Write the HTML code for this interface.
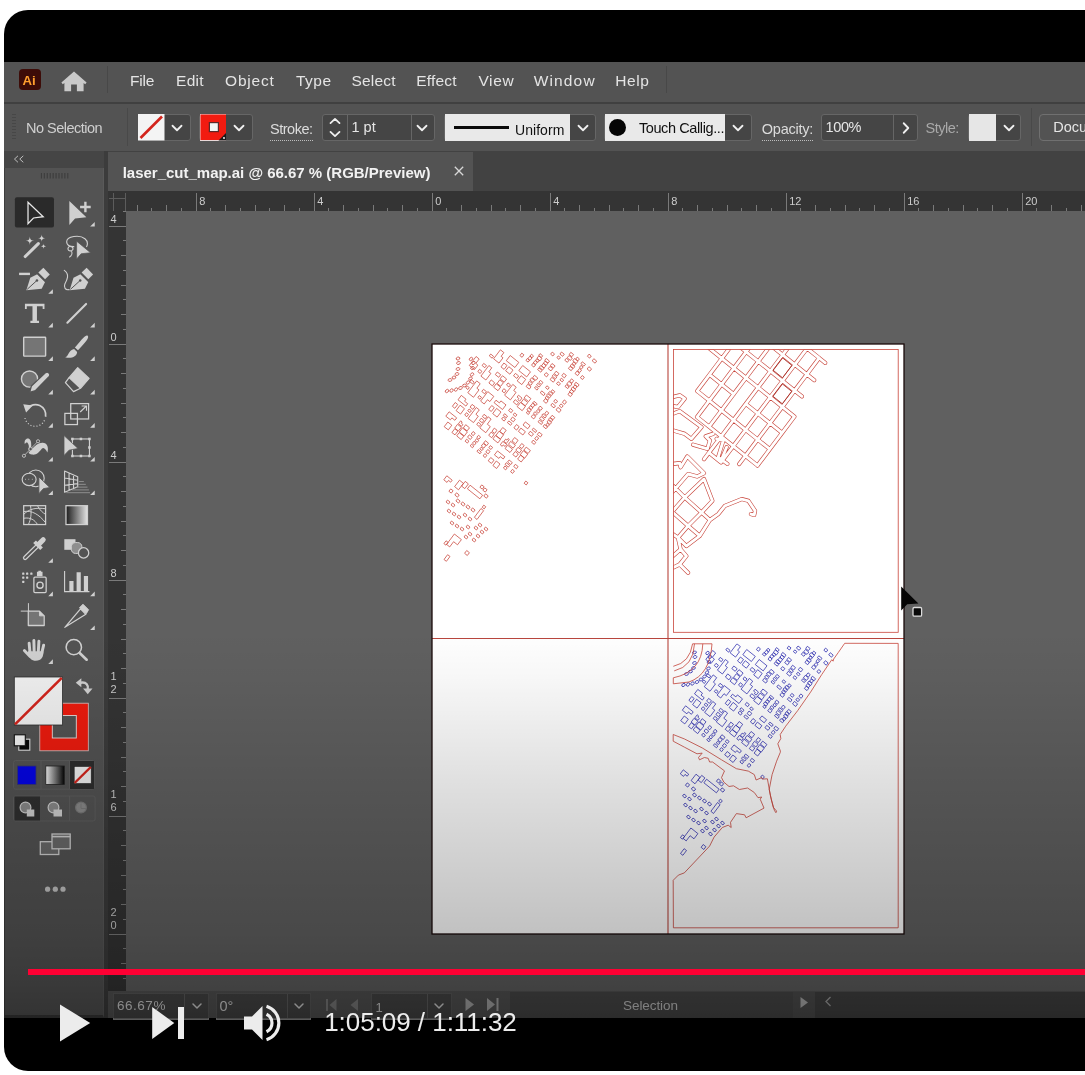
<!DOCTYPE html>
<html lang="en">
<head>
<meta charset="utf-8">
<title>laser_cut_map.ai - video</title>
<style>
html,body{margin:0;padding:0;background:#fff;}
body{width:1085px;height:1075px;overflow:hidden;position:relative;font-family:"Liberation Sans",sans-serif;}
.abs{position:absolute;}
#video{position:absolute;left:4px;top:10px;width:1200px;height:1061px;background:#000;border-radius:24px;overflow:hidden;}
/* everything inside #app uses page coordinates shifted by (-4,-10) */
#app{position:absolute;left:-4px;top:-10px;width:1204px;height:1075px;will-change:transform;}
#menubar{left:4px;top:62px;width:1200px;height:41px;background:#535353;}
#menusep{left:4px;top:102px;width:1200px;height:2px;background:#404040;}
#ctrlbar{left:4px;top:104px;width:1200px;height:47px;background:#535353;}
#tabbar{left:108px;top:151px;width:1100px;height:40px;background:#424242;}
#tab{left:108px;top:152px;width:365px;height:39px;background:#535353;}
#toolhdr{left:4px;top:151px;width:100px;height:17px;background:#454545;}
#toolbar{left:4px;top:168px;width:100px;height:850px;background:#535353;box-sizing:border-box;border-left:1.5px solid #3e3e3e;border-bottom:3px solid #3a3a3a;border-right:1px solid #5a5a5a;}
#toolsep{left:104px;top:151px;width:4px;height:867px;background:#3c3c3c;}
#canvas{left:108px;top:191px;width:1100px;height:800px;background:#606060;}
#hruler{left:108px;top:191px;width:1100px;height:20px;background:#343434;}
#vruler{left:108px;top:191px;width:18px;height:800px;background:#343434;}
#statusbar{left:108px;top:991px;width:1100px;height:27px;background:#535353;overflow:hidden;}
.t{position:absolute;white-space:pre;}
.bx{position:absolute;box-sizing:border-box;}
</style>
</head>
<body>
<div id="video">
<div id="app">
  <div id="menubar" class="abs"></div>
  <div id="menusep" class="abs"></div>
  <div id="ctrlbar" class="abs"></div>
  <div id="tabbar" class="abs"></div>
  <div id="tab" class="abs"></div>
  <div id="toolhdr" class="abs"></div>
  <div id="toolbar" class="abs"></div>
  <div id="toolsep" class="abs"></div>
  <div id="canvas" class="abs"></div>
  <div id="hruler" class="abs"></div>
  <div id="vruler" class="abs"></div>
  <div id="statusbar" class="abs"></div>
  <!--MENU-->
<div class="bx" style="left:19px;top:69px;width:22px;height:21px;border-radius:4px;background:#3d0c08;"></div>
<span class="t" style="left:22.6px;top:71.9px;font-size:13.2px;line-height:17px;color:#ff9f2e;font-weight:700;">Ai</span>
<svg class="abs" style="left:58px;top:68px" width="32" height="26" viewBox="0 0 32 26"><path d="M16 3.6 L28.6 14.6 L27.2 16.2 L25.6 14.9 V23.2 H18.9 V16.4 H13.1 V23.2 H6.4 V14.9 L4.8 16.2 L3.4 14.6 Z" fill="#c9c9c9"/></svg>
<div class="bx" style="left:107px;top:66px;width:1px;height:27px;background:#484848;"></div>
<div class="bx" style="left:666px;top:66px;width:1px;height:27px;background:#484848;"></div>
<span class="t" style="left:130.0px;top:70.6px;font-size:15.5px;line-height:20px;color:#e4e4e4;letter-spacing:-0.192px;">File</span>
<span class="t" style="left:176.1px;top:70.6px;font-size:15.5px;line-height:20px;color:#e4e4e4;letter-spacing:0.230px;">Edit</span>
<span class="t" style="left:225.1px;top:70.6px;font-size:15.5px;line-height:20px;color:#e4e4e4;letter-spacing:0.761px;">Object</span>
<span class="t" style="left:296.0px;top:70.6px;font-size:15.5px;line-height:20px;color:#e4e4e4;letter-spacing:0.465px;">Type</span>
<span class="t" style="left:351.5px;top:70.6px;font-size:15.5px;line-height:20px;color:#e4e4e4;letter-spacing:0.204px;">Select</span>
<span class="t" style="left:416.2px;top:70.6px;font-size:15.5px;line-height:20px;color:#e4e4e4;letter-spacing:0.190px;">Effect</span>
<span class="t" style="left:478.4px;top:70.6px;font-size:15.5px;line-height:20px;color:#e4e4e4;letter-spacing:0.661px;">View</span>
<span class="t" style="left:533.7px;top:70.6px;font-size:15.5px;line-height:20px;color:#e4e4e4;letter-spacing:1.154px;">Window</span>
<span class="t" style="left:615.3px;top:70.6px;font-size:15.5px;line-height:20px;color:#e4e4e4;letter-spacing:0.574px;">Help</span>
<!--/MENU-->
  <!--CTRL-->
<div class="bx" style="left:12px;top:114px;width:4px;height:27px;background:repeating-linear-gradient(to bottom,#474747 0 1.5px,transparent 1.5px 3px);"></div>
<span class="t" style="left:26.1px;top:118.9px;font-size:14.5px;line-height:19px;color:#cfcfcf;letter-spacing:-0.529px;">No Selection</span>
<div class="bx" style="left:127px;top:108px;width:1px;height:38px;background:#494949;"></div>
<div class="bx" style="left:137.5px;top:113.5px;width:53.0px;height:27.0px;background:#454545;border:1px solid #666666;border-radius:3px;"></div>
<svg class="abs" style="left:138px;top:114px" width="26.5" height="26.5" viewBox="0 0 26.5 26.5"><rect width="26.5" height="26.5" fill="#f4f4f4"/><path d="M2.5 24 L24 2.5" stroke="#d3241c" stroke-width="2.6"/></svg>
<svg class="abs" style="left:169.3px;top:119.5px" width="16" height="16" viewBox="-8 -8 16 16"><path transform="rotate(0)" d="M-4.5 -2.25 L0 2.25 L4.5 -2.25" fill="none" stroke="#f0f0f0" stroke-width="1.8" stroke-linecap="round" stroke-linejoin="round"/></svg>
<div class="bx" style="left:199.3px;top:113.5px;width:53.5px;height:27.0px;background:#454545;border:1px solid #666666;border-radius:3px;"></div>
<svg class="abs" style="left:199.8px;top:114px" width="26.5" height="26.5" viewBox="0 0 26.5 26.5"><rect width="26.5" height="26.5" fill="#f21b10" stroke="#e8d8d8" stroke-width="1"/><rect x="9.4" y="8.6" width="9" height="9" fill="#f4f4f4" stroke="#5a2a2a" stroke-width="1.2"/><path d="M26.5 18.5 V26.5 H18.5 Z" fill="#1a1a1a"/><circle cx="24" cy="24" r="0.9" fill="#fff"/></svg>
<svg class="abs" style="left:231.4px;top:119.5px" width="16" height="16" viewBox="-8 -8 16 16"><path transform="rotate(0)" d="M-4.5 -2.25 L0 2.25 L4.5 -2.25" fill="none" stroke="#f0f0f0" stroke-width="1.8" stroke-linecap="round" stroke-linejoin="round"/></svg>
<span class="t" style="left:270.0px;top:118.9px;font-size:14.5px;line-height:19px;color:#dcdcdc;letter-spacing:-0.489px;border-bottom:1px dotted #bdbdbd;padding-bottom:0px;line-height:21px;">Stroke:</span>
<div class="bx" style="left:322.0px;top:113.5px;width:113.0px;height:27.0px;background:#454545;border:1px solid #666666;border-radius:3px;"></div>
<div class="bx" style="left:347px;top:114px;width:1px;height:26px;background:#666;"></div>
<div class="bx" style="left:410.5px;top:114px;width:1px;height:26px;background:#666;"></div>
<svg class="abs" style="left:326.7px;top:113.3px" width="16" height="16" viewBox="-8 -8 16 16"><path transform="rotate(180)" d="M-4.5 -2.1 L0 2.1 L4.5 -2.1" fill="none" stroke="#f0f0f0" stroke-width="1.8" stroke-linecap="round" stroke-linejoin="round"/></svg>
<svg class="abs" style="left:326.7px;top:125.6px" width="16" height="16" viewBox="-8 -8 16 16"><path transform="rotate(0)" d="M-4.5 -2.1 L0 2.1 L4.5 -2.1" fill="none" stroke="#f0f0f0" stroke-width="1.8" stroke-linecap="round" stroke-linejoin="round"/></svg>
<span class="t" style="left:351.5px;top:118.3px;font-size:14.5px;line-height:19px;color:#e6e6e6;">1 pt</span>
<svg class="abs" style="left:414.3px;top:119.5px" width="16" height="16" viewBox="-8 -8 16 16"><path transform="rotate(0)" d="M-4.5 -2.25 L0 2.25 L4.5 -2.25" fill="none" stroke="#f0f0f0" stroke-width="1.8" stroke-linecap="round" stroke-linejoin="round"/></svg>
<div class="bx" style="left:444.0px;top:113.5px;width:152.0px;height:27.0px;background:#454545;border:1px solid #666666;border-radius:3px;"></div>
<div class="bx" style="left:444.6px;top:114px;width:125.2px;height:26.5px;background:#e9e9e9;"></div>
<div class="bx" style="left:453.5px;top:126.3px;width:55.3px;height:3.2px;background:#0a0a0a;"></div>
<span class="t" style="left:515.0px;top:120.9px;font-size:14px;line-height:18px;color:#101010;letter-spacing:0.049px;">Uniform</span>
<svg class="abs" style="left:574.6px;top:119.5px" width="16" height="16" viewBox="-8 -8 16 16"><path transform="rotate(0)" d="M-4.5 -2.25 L0 2.25 L4.5 -2.25" fill="none" stroke="#f0f0f0" stroke-width="1.8" stroke-linecap="round" stroke-linejoin="round"/></svg>
<div class="bx" style="left:604.0px;top:113.5px;width:148.0px;height:27.0px;background:#454545;border:1px solid #666666;border-radius:3px;"></div>
<div class="bx" style="left:604.6px;top:114px;width:120.6px;height:26.5px;background:#e9e9e9;"></div>
<div class="bx" style="left:609.1px;top:118.8px;width:17.4px;height:17.4px;border-radius:50%;background:#050505;"></div>
<span class="t" style="left:638.9px;top:119.1px;font-size:14.5px;line-height:19px;color:#101010;letter-spacing:-0.391px;">Touch Callig...</span>
<svg class="abs" style="left:730.3px;top:119.5px" width="16" height="16" viewBox="-8 -8 16 16"><path transform="rotate(0)" d="M-4.5 -2.25 L0 2.25 L4.5 -2.25" fill="none" stroke="#f0f0f0" stroke-width="1.8" stroke-linecap="round" stroke-linejoin="round"/></svg>
<span class="t" style="left:761.8px;top:118.9px;font-size:14.5px;line-height:19px;color:#dcdcdc;letter-spacing:-0.255px;border-bottom:1px dotted #bdbdbd;line-height:21px;">Opacity:</span>
<div class="bx" style="left:821.3px;top:113.5px;width:96.7px;height:27.0px;background:#454545;border:1px solid #666666;border-radius:3px;"></div>
<div class="bx" style="left:892.5px;top:114px;width:1px;height:26px;background:#666;"></div>
<span class="t" style="left:825.5px;top:118.3px;font-size:14.5px;line-height:19px;color:#e6e6e6;letter-spacing:-0.362px;">100%</span>
<svg class="abs" style="left:897.5px;top:119.5px" width="16" height="16" viewBox="-8 -8 16 16"><path transform="rotate(-90)" d="M-4.75 -2.3 L0 2.3 L4.75 -2.3" fill="none" stroke="#f0f0f0" stroke-width="1.8" stroke-linecap="round" stroke-linejoin="round"/></svg>
<span class="t" style="left:925.6px;top:118.7px;font-size:14.5px;line-height:19px;color:#a9a9a9;letter-spacing:-0.493px;">Style:</span>
<div class="bx" style="left:968.3px;top:113.5px;width:53.2px;height:27.0px;background:#454545;border:1px solid #666666;border-radius:3px;"></div>
<div class="bx" style="left:968.9px;top:114px;width:27px;height:26.5px;background:#e6e6e6;"></div>
<svg class="abs" style="left:1000.8px;top:119.5px" width="16" height="16" viewBox="-8 -8 16 16"><path transform="rotate(0)" d="M-4.5 -2.25 L0 2.25 L4.5 -2.25" fill="none" stroke="#f0f0f0" stroke-width="1.8" stroke-linecap="round" stroke-linejoin="round"/></svg>
<div class="bx" style="left:1031px;top:108px;width:1px;height:38px;background:#494949;"></div>
<div class="bx" style="left:1039.2px;top:113.5px;width:160.8px;height:27.0px;background:#535353;border:1px solid #707070;border-radius:4px;"></div>
<span class="t" style="left:1053.3px;top:118.3px;font-size:14.5px;line-height:19px;color:#e6e6e6;">Document Setup</span>
<!--/CTRL-->
  <!--TOOLS-->
<svg class="abs" style="left:4px;top:150px" width="104" height="870" viewBox="4 150 104 870"><defs><linearGradient id="gtool" x1="0" x2="1" y1="0" y2="0"><stop offset="0" stop-color="#1c1c1c"/><stop offset="1" stop-color="#e4e4e4"/></linearGradient><linearGradient id="gmode" x1="0" x2="1" y1="0" y2="0"><stop offset="0" stop-color="#f4f4f4"/><stop offset="1" stop-color="#050505"/></linearGradient></defs><g transform="translate(4,150) scale(0.13961)"><path d="M100 42L75 65L100 88M138 42L113 65L138 88" fill="none" stroke="#c0c0c0" stroke-width="7"/><path d="M268 165V205 M289 165V205 M310 165V205 M331 165V205 M352 165V205 M373 165V205 M394 165V205 M415 165V205 M436 165V205 M457 165V205" stroke="#3d3d3d" stroke-width="8"/><rect x="78" y="338" width="280" height="217" rx="14" fill="#2a2a2a"/><path d="M172 374L172 528L211 487L281 478Z" fill="none" stroke="#e8e8e8" stroke-width="9" stroke-linejoin="miter"/><path d="M468 366L468 537L509 491L590 482Z" fill="#d0d0d0"/><path d="M583 370V446M545 408H621" stroke="#d0d0d0" stroke-width="17"/><path d="M650 515V548H617Z" fill="#d0d0d0"/><path d="M152 763L246 670" stroke="#d0d0d0" stroke-width="22" stroke-linecap="round"/><path d="M185 620Q185 650 215 650Q185 650 185 680Q185 650 155 650Q185 650 185 620ZM270 606Q270 632 296 632Q270 632 270 658Q270 632 244 632Q270 632 270 606ZM283 670Q283 690 303 690Q283 690 283 710Q283 690 263 690Q283 690 283 670Z" fill="#d0d0d0"/><path d="M500 692C436 690 428 632 500 620C570 610 612 648 592 692M472 690C448 700 458 732 486 720C502 712 492 690 472 690M482 722C492 740 484 758 470 766" fill="none" stroke="#d0d0d0" stroke-width="8" stroke-linecap="round"/><path d="M520 653L520 780L553 743L620 736Z" fill="#d0d0d0" stroke="#535353" stroke-width="5"/><rect x="108" y="879" width="78" height="17" fill="#d0d0d0"/><g transform="translate(0,0)"><path d="M160 1004 L188 915 L238 890 L294 946 L270 994 Z" fill="#d0d0d0"/><path d="M246 878 L282 844 L328 892 L294 926 Z" fill="#d0d0d0"/><path d="M236 884 L300 948" stroke="#535353" stroke-width="7"/><path d="M166 998 L232 938" stroke="#535353" stroke-width="7"/><circle cx="236" cy="934" r="9" fill="#535353"/></g><path d="M350 997V1030H317Z" fill="#d0d0d0"/><g transform="translate(310,0)"><path d="M160 1004 L188 915 L238 890 L294 946 L270 994 Z" fill="#d0d0d0"/><path d="M246 878 L282 844 L328 892 L294 926 Z" fill="#d0d0d0"/><path d="M236 884 L300 948" stroke="#535353" stroke-width="7"/><path d="M166 998 L232 938" stroke="#535353" stroke-width="7"/><circle cx="236" cy="934" r="9" fill="#535353"/></g><path d="M432 862C472 890 452 930 436 960C426 985 440 1006 466 1000" fill="none" stroke="#d0d0d0" stroke-width="8" stroke-linecap="round"/></g><g transform="translate(4,295) scale(0.13961)"><path d="M150 62H290V100H277V80H236V184H251V200H189V184H204V80H163V100H150Z" fill="#d0d0d0"/><path d="M350 199V232H317Z" fill="#d0d0d0"/><path d="M650 199V232H617Z" fill="#d0d0d0"/><path d="M454 198L588 64" stroke="#d0d0d0" stroke-width="15" stroke-linecap="round"/><rect x="141" y="303" width="157" height="135" rx="4" fill="#757575" stroke="#d0d0d0" stroke-width="10"/><path d="M350 439V472H317Z" fill="#d0d0d0"/><path d="M650 439V472H617Z" fill="#d0d0d0"/><path d="M600 292C586 282 572 300 508 376L530 396C594 330 610 305 600 292Z" fill="#d0d0d0"/><path d="M502 386L524 408C522 442 480 458 438 446C466 436 458 396 502 386Z" fill="#d0d0d0"/><circle cx="183" cy="602" r="58" fill="#757575" stroke="#d0d0d0" stroke-width="10"/><path d="M184 698L196 652L298 556C314 544 338 568 324 584L226 684Z" fill="#d0d0d0" stroke="#535353" stroke-width="9" stroke-linejoin="round"/><path d="M350 679V712H317Z" fill="#d0d0d0"/><path d="M650 679V712H617Z" fill="#d0d0d0"/><path d="M528 520L610 598L548 668L466 592Z" fill="#d0d0d0" stroke="#d0d0d0" stroke-width="8" stroke-linejoin="round"/><path d="M466 592L440 628L498 692L548 668" fill="none" stroke="#d0d0d0" stroke-width="9" stroke-linejoin="round"/><path d="M168 812A74 74 0 0 1 298 872" fill="none" stroke="#d0d0d0" stroke-width="12"/><path d="M138 782L206 792L158 842Z" fill="#d0d0d0"/><path d="M290 898A74 74 0 0 1 150 878" fill="none" stroke="#d0d0d0" stroke-width="9" stroke-dasharray="7 15"/><path d="M350 917V950H317Z" fill="#d0d0d0"/><path d="M650 917V950H617Z" fill="#d0d0d0"/><rect x="478" y="778" width="128" height="110" fill="none" stroke="#d0d0d0" stroke-width="9"/><rect x="436" y="848" width="90" height="80" fill="none" stroke="#d0d0d0" stroke-width="9"/><path d="M546 838L588 797M556 795H591V829" fill="none" stroke="#d0d0d0" stroke-width="8"/></g><g transform="translate(4,425) scale(0.13961)"><path d="M350 229V262H317Z" fill="#d0d0d0"/><path d="M650 229V262H617Z" fill="#d0d0d0"/><rect x="490" y="100" width="122" height="122" fill="none" stroke="#d0d0d0" stroke-width="8"/><rect x="481" y="91" width="18" height="18" fill="#d0d0d0"/><rect x="542" y="91" width="18" height="18" fill="#d0d0d0"/><rect x="603" y="91" width="18" height="18" fill="#d0d0d0"/><rect x="603" y="152" width="18" height="18" fill="#d0d0d0"/><rect x="603" y="213" width="18" height="18" fill="#d0d0d0"/><rect x="542" y="213" width="18" height="18" fill="#d0d0d0"/><rect x="481" y="213" width="18" height="18" fill="#d0d0d0"/><path d="M430 76L430 218L466 180L530 168Z" fill="#d0d0d0" stroke="#535353" stroke-width="5"/><circle cx="228" cy="382" r="60" fill="none" stroke="#d0d0d0" stroke-width="8"/><ellipse cx="180" cy="390" rx="50" ry="44" fill="#535353" stroke="#d0d0d0" stroke-width="8"/><path d="M152 390H156M176 390H180M200 390H204" stroke="#d0d0d0" stroke-width="9"/><path d="M250 372L250 492L282 456L328 448Z" fill="#d0d0d0" stroke="#535353" stroke-width="6"/><path d="M350 469V502H317Z" fill="#d0d0d0"/><path d="M650 469V502H617Z" fill="#d0d0d0"/><path d="M434 330L528 370V442L434 482ZM466 344V468M498 357V455M434 380L528 396M434 432L528 420" fill="none" stroke="#d0d0d0" stroke-width="8" stroke-linejoin="round"/><path d="M536 405H572M530 425H586M518 445H598M486 465H608M446 485H616" stroke="#9a9a9a" stroke-width="6"/><rect x="141" y="578" width="157" height="135" fill="none" stroke="#d0d0d0" stroke-width="9"/><path d="M141 620C200 610 250 640 298 700M141 668C190 660 220 680 240 713M190 578C200 640 190 680 175 713M240 578C255 610 280 630 298 640M141 640C180 600 230 590 298 600" fill="none" stroke="#d0d0d0" stroke-width="7"/><rect x="444" y="578" width="154" height="135" fill="url(#gtool)" stroke="#d0d0d0" stroke-width="9"/><path d="M350 954V987H317Z" fill="#d0d0d0"/><rect x="432" y="818" width="80" height="76" fill="#d0d0d0"/><rect x="482" y="842" width="76" height="78" rx="30" fill="#8e8e8e" stroke="#d0d0d0" stroke-width="7"/><circle cx="570" cy="916" r="37" fill="#535353" stroke="#d0d0d0" stroke-width="9"/></g><g transform="translate(4,555) scale(0.13961)"><rect x="214" y="158" width="88" height="112" rx="8" fill="none" stroke="#d0d0d0" stroke-width="9"/><circle cx="258" cy="216" r="22" fill="none" stroke="#d0d0d0" stroke-width="10"/><path d="M236 120H276V152H236ZM246 112H266V122H246Z" fill="#d0d0d0"/><rect x="130" y="126" width="16" height="16" rx="3" fill="#d0d0d0"/><rect x="158" y="126" width="16" height="16" rx="3" fill="#d0d0d0"/><rect x="188" y="126" width="16" height="16" rx="3" fill="#d0d0d0"/><rect x="130" y="154" width="16" height="16" rx="3" fill="#d0d0d0"/><rect x="158" y="154" width="16" height="16" rx="3" fill="#d0d0d0"/><rect x="130" y="184" width="16" height="16" rx="3" fill="#d0d0d0"/><path d="M350 262V295H317Z" fill="#d0d0d0"/><path d="M650 262V295H617Z" fill="#d0d0d0"/><path d="M434 114V262H612" fill="none" stroke="#d0d0d0" stroke-width="8"/><path d="M468 186H498V260H468ZM520 124H550V260H520ZM572 150H602V260H572Z" fill="#d0d0d0"/><path d="M120 402H182M175 345V402" stroke="#d0d0d0" stroke-width="7"/><path d="M174 402H254L288 436V505H174Z" fill="#757575" stroke="#d0d0d0" stroke-width="9" stroke-linejoin="round"/><path d="M254 402V436H288" fill="#d0d0d0" stroke="#d0d0d0" stroke-width="6"/><path d="M436 518L548 386L586 424Z" fill="#535353" stroke="#d0d0d0" stroke-width="9" stroke-linejoin="round"/><path d="M540 378L566 352L606 392L590 420Z" fill="#d0d0d0" stroke="#d0d0d0" stroke-width="6" stroke-linejoin="round"/><path d="M650 505V538H617Z" fill="#d0d0d0"/><path d="M186 700L180 632M216 690L214 612M246 690L250 618M270 705L284 646M185 725L146 684" fill="none" stroke="#d0d0d0" stroke-width="21" stroke-linecap="round"/><path d="M172 690H282C284 730 268 758 228 758C198 758 176 738 172 700Z" fill="#d0d0d0"/><path d="M350 747V780H317Z" fill="#d0d0d0"/><circle cx="500" cy="660" r="55" fill="none" stroke="#d0d0d0" stroke-width="11"/><path d="M542 702L592 750" stroke="#d0d0d0" stroke-width="19" stroke-linecap="round"/><path d="M548 915C592 905 606 940 600 962" fill="none" stroke="#d0d0d0" stroke-width="17"/><path d="M514 915L554 882V948ZM600 998L566 956H634Z" fill="#d0d0d0"/></g><g transform="translate(14,428) scale(0.08292)"><path d="M130 192C118 140 165 104 196 145C216 175 200 215 216 236C260 216 300 168 360 180C402 186 422 240 402 296C386 260 360 226 335 250C300 292 270 330 215 320C180 314 160 290 175 250C186 224 176 190 160 176C150 170 140 180 130 192Z" fill="#d0d0d0"/><path d="M120 335L290 160" stroke="#535353" stroke-width="26"/><path d="M120 335L290 160" stroke="#d0d0d0" stroke-width="9"/><circle cx="120" cy="335" r="19" fill="#535353" stroke="#d0d0d0" stroke-width="10"/><circle cx="200" cy="254" r="21" fill="#535353" stroke="#d0d0d0" stroke-width="10"/><circle cx="290" cy="160" r="19" fill="#535353" stroke="#d0d0d0" stroke-width="10"/></g><g transform="translate(14,530) scale(0.08292)"><path d="M134 336L282 192" stroke="#d0d0d0" stroke-width="54" stroke-linecap="round"/><path d="M134 336L290 184" stroke="#535353" stroke-width="24" stroke-linecap="round"/><path d="M248 142L332 226" stroke="#d0d0d0" stroke-width="46" stroke-linecap="butt"/><path d="M300 170L352 118" stroke="#d0d0d0" stroke-width="62" stroke-linecap="round"/></g><rect x="39.8" y="703.2" width="48.5" height="47.6" fill="#ee1b0e" stroke="#d8c8c8" stroke-width="0.8"/><rect x="52.3" y="715.5" width="24" height="22.5" fill="#535353" stroke="#e8e0e0" stroke-width="0.9"/><rect x="14.3" y="677" width="48.2" height="48" fill="#f1f1f1" stroke="#2e2e2e" stroke-width="0.8"/><path d="M15 724.3L61.8 677.8" stroke="#d3241c" stroke-width="2.6"/><rect x="18.8" y="739.2" width="11" height="11" fill="#0a0a0a" stroke="#e4e4e4" stroke-width="1.1"/><rect x="14.3" y="734.8" width="11" height="11" fill="#f4f4f4" stroke="#111" stroke-width="1.1"/><rect x="13.6" y="760.6" width="80.6" height="28.6" rx="2" fill="none" stroke="#5f5f5f" stroke-width="1"/><path d="M41 761V789M69.6 761V789" stroke="#5f5f5f" stroke-width="1"/><rect x="70" y="761" width="24" height="28" fill="#2e2e2e"/><rect x="17.5" y="766" width="18.5" height="18.5" fill="#0404e6" stroke="#3a3a6a" stroke-width="0.8"/><rect x="45.8" y="766" width="18.5" height="18.5" fill="url(#gmode)" stroke="#222" stroke-width="0.8"/><rect x="74.2" y="766.5" width="17" height="17" fill="#f0f0f0" stroke="#222" stroke-width="0.6"/><path d="M74.6 783L90.8 767" stroke="#d3241c" stroke-width="2.4"/><rect x="13.6" y="796" width="81.5" height="25" rx="2" fill="none" stroke="#5f5f5f" stroke-width="1"/><path d="M69.6 796V821" stroke="#5f5f5f" stroke-width="1"/><rect x="14.5" y="796.5" width="25.5" height="24" fill="#303030"/><circle cx="25.5" cy="807.5" r="5.4" fill="#8a8a8a" stroke="#d0d0d0" stroke-width="1.2"/><circle cx="53.5" cy="807.5" r="5.4" fill="#8a8a8a" stroke="#d0d0d0" stroke-width="1.2"/><circle cx="81.0" cy="807.5" r="5.4" fill="#8a8a8a" stroke="#7a7a7a" stroke-width="1.2"/><rect x="26.8" y="809.5" width="7.5" height="7" fill="#d0d0d0"/><rect x="53.5" y="809.5" width="8.5" height="7" fill="#d0d0d0"/><path d="M81 803.5V808.5H86" fill="none" stroke="#7a7a7a" stroke-width="1"/><rect x="40.3" y="841.7" width="18.5" height="12.8" fill="#6a6a6a" stroke="#d0d0d0" stroke-width="1.3"/><rect x="52" y="834" width="18.2" height="14.8" fill="#6a6a6a" stroke="#d0d0d0" stroke-width="1.3"/><path d="M52 836.6H70.2" stroke="#d0d0d0" stroke-width="1.6"/><circle cx="47.6" cy="889.2" r="2.6" fill="#c4c4c4"/><circle cx="55.3" cy="889.2" r="2.6" fill="#c4c4c4"/><circle cx="63" cy="889.2" r="2.6" fill="#c4c4c4"/></svg>
<!--/TOOLS-->
  <!--RULERS-->
<span class="t" style="left:122.7px;top:162.5px;font-size:15px;line-height:20px;color:#f2f2f2;font-weight:700;letter-spacing:-0.010px;">laser_cut_map.ai @ 66.67 % (RGB/Preview)</span>
<svg class="abs" style="left:453px;top:165px" width="12" height="12" viewBox="0 0 12 12"><path d="M1.8 1.8 L10.2 10.2 M10.2 1.8 L1.8 10.2" stroke="#d8d8d8" stroke-width="1.3"/></svg>
<svg class="abs" style="left:108px;top:191px" width="1100" height="830" viewBox="108 191 1100 830" font-family="Liberation Sans, sans-serif" font-size="11" fill="#cccccc">
<path d="M137.0 205V211 M151.8 207.5V211 M166.5 205V211 M181.2 207.5V211 M196.0 193V211 M210.8 207.5V211 M225.5 205V211 M240.2 207.5V211 M255.0 205V211 M269.8 207.5V211 M284.5 205V211 M299.2 207.5V211 M314.0 193V211 M328.8 207.5V211 M343.5 205V211 M358.2 207.5V211 M373.0 205V211 M387.8 207.5V211 M402.5 205V211 M417.2 207.5V211 M432.0 193V211 M446.8 207.5V211 M461.5 205V211 M476.2 207.5V211 M491.0 205V211 M505.8 207.5V211 M520.5 205V211 M535.2 207.5V211 M550.0 193V211 M564.8 207.5V211 M579.5 205V211 M594.2 207.5V211 M609.0 205V211 M623.8 207.5V211 M638.5 205V211 M653.2 207.5V211 M668.0 193V211 M682.8 207.5V211 M697.5 205V211 M712.2 207.5V211 M727.0 205V211 M741.8 207.5V211 M756.5 205V211 M771.2 207.5V211 M786.0 193V211 M800.8 207.5V211 M815.5 205V211 M830.2 207.5V211 M845.0 205V211 M859.8 207.5V211 M874.5 205V211 M889.2 207.5V211 M904.0 193V211 M918.8 207.5V211 M933.5 205V211 M948.2 207.5V211 M963.0 205V211 M977.8 207.5V211 M992.5 205V211 M1007.2 207.5V211 M1022.0 193V211 M1036.8 207.5V211 M1051.5 205V211 M1066.2 207.5V211 M1081.0 205V211 M1095.8 207.5V211" stroke="#7a7a7a" stroke-width="1" fill="none" shape-rendering="crispEdges"/>
<text x="199.2" y="205">8</text>
<text x="317.2" y="205">4</text>
<text x="435.2" y="205">0</text>
<text x="553.2" y="205">4</text>
<text x="671.2" y="205">8</text>
<text x="789.2" y="205">12</text>
<text x="907.2" y="205">16</text>
<text x="1025.2" y="205">20</text>
<path d="M122.5 211.2H126 M109 226.0H126 M122.5 240.8H126 M120.5 255.5H126 M122.5 270.2H126 M120.5 285.0H126 M122.5 299.8H126 M120.5 314.5H126 M122.5 329.2H126 M109 344.0H126 M122.5 358.8H126 M120.5 373.5H126 M122.5 388.2H126 M120.5 403.0H126 M122.5 417.8H126 M120.5 432.5H126 M122.5 447.2H126 M109 462.0H126 M122.5 476.8H126 M120.5 491.5H126 M122.5 506.2H126 M120.5 521.0H126 M122.5 535.8H126 M120.5 550.5H126 M122.5 565.2H126 M109 580.0H126 M122.5 594.8H126 M120.5 609.5H126 M122.5 624.2H126 M120.5 639.0H126 M122.5 653.8H126 M120.5 668.5H126 M122.5 683.2H126 M109 698.0H126 M122.5 712.8H126 M120.5 727.5H126 M122.5 742.2H126 M120.5 757.0H126 M122.5 771.8H126 M120.5 786.5H126 M122.5 801.2H126 M109 816.0H126 M122.5 830.8H126 M120.5 845.5H126 M122.5 860.2H126 M120.5 875.0H126 M122.5 889.8H126 M120.5 904.5H126 M122.5 919.2H126 M109 934.0H126 M122.5 948.8H126 M120.5 963.5H126 M122.5 978.2H126 M120.5 993.0H126" stroke="#7a7a7a" stroke-width="1" fill="none" shape-rendering="crispEdges"/>
<text x="110.5" y="222.5">4</text>
<text x="110.5" y="340.5">0</text>
<text x="110.5" y="458.5">4</text>
<text x="110.5" y="576.5">8</text>
<text x="110.5" y="680">1</text><text x="110.5" y="693">2</text>
<text x="110.5" y="798">1</text><text x="110.5" y="811">6</text>
<text x="110.5" y="916">2</text><text x="110.5" y="929">0</text>
<path d="M109 198.5H126M113.5 193V211M125.5 193V211" stroke="#5c5c5c" stroke-width="1" fill="none" shape-rendering="crispEdges"/>
</svg>
<!--/RULERS-->
  <!--ARTBOARD-->
<svg class="abs" style="left:420px;top:335px" width="500" height="610" viewBox="420 335 500 610">
<defs><clipPath id="cTR"><rect x="673.4" y="349.4" width="224.8" height="282.9"/></clipPath><clipPath id="cBR"><rect x="673.4" y="643.4" width="224.8" height="284.4"/></clipPath></defs>
<rect x="432" y="344" width="472" height="590" fill="#ffffff"/>
<g clip-path="url(#cTR)" fill="none" stroke-linecap="round" stroke-linejoin="round"><path d="M782.3 406.9L794.4 416.6 M794.4 416.6L782.1 432.9 M782.1 432.9L770.0 423.2 M770.0 423.2L782.3 406.9 M770.0 423.2L782.1 432.9 M782.1 432.9L769.8 449.2 M769.8 449.2L757.7 439.5 M757.7 439.5L770.0 423.2 M757.7 439.5L769.8 449.2 M769.8 449.2L757.5 465.5 M757.5 465.5L745.4 455.8 M745.4 455.8L757.7 439.5 M807.1 348.3L819.2 358.0 M819.2 358.0L806.9 374.3 M806.9 374.3L794.8 364.6 M794.8 364.6L807.1 348.3 M794.8 364.6L806.9 374.3 M806.9 374.3L794.6 390.6 M794.6 390.6L782.5 380.9 M782.5 380.9L794.8 364.6 M782.5 380.9L794.6 390.6 M794.6 390.6L782.3 406.9 M782.3 406.9L770.2 397.2 M770.2 397.2L782.5 380.9 M770.2 397.2L782.3 406.9 M782.3 406.9L770.0 423.2 M770.0 423.2L757.9 413.5 M757.9 413.5L770.2 397.2 M757.9 413.5L770.0 423.2 M770.0 423.2L757.7 439.5 M757.7 439.5L745.6 429.8 M745.6 429.8L757.9 413.5 M745.6 429.8L757.7 439.5 M757.7 439.5L745.4 455.8 M745.4 455.8L733.3 446.1 M733.3 446.1L745.6 429.8 M795.0 338.6L807.1 348.3 M807.1 348.3L794.8 364.6 M794.8 364.6L782.7 354.9 M782.7 354.9L795.0 338.6 M782.7 354.9L794.8 364.6 M794.8 364.6L782.5 380.9 M782.5 380.9L770.4 371.2 M770.4 371.2L782.7 354.9 M770.4 371.2L782.5 380.9 M782.5 380.9L770.2 397.2 M770.2 397.2L758.1 387.5 M758.1 387.5L770.4 371.2 M758.1 387.5L770.2 397.2 M770.2 397.2L757.9 413.5 M757.9 413.5L745.8 403.8 M745.8 403.8L758.1 387.5 M745.8 403.8L757.9 413.5 M757.9 413.5L745.6 429.8 M745.6 429.8L733.5 420.1 M733.5 420.1L745.8 403.8 M733.5 420.1L745.6 429.8 M745.6 429.8L733.3 446.1 M733.3 446.1L721.2 436.4 M721.2 436.4L733.5 420.1 M721.2 436.4L733.3 446.1 M733.3 446.1L721.0 462.4 M721.0 462.4L708.9 452.7 M708.9 452.7L721.2 436.4 M770.6 345.2L782.7 354.9 M782.7 354.9L770.4 371.2 M770.4 371.2L758.3 361.5 M758.3 361.5L770.6 345.2 M758.3 361.5L770.4 371.2 M770.4 371.2L758.1 387.5 M758.1 387.5L746.0 377.8 M746.0 377.8L758.3 361.5 M746.0 377.8L758.1 387.5 M758.1 387.5L745.8 403.8 M733.7 394.1L746.0 377.8 M745.8 403.8L733.5 420.1 M733.5 420.1L721.4 410.4 M721.4 410.4L733.7 394.1 M721.4 410.4L733.5 420.1 M733.5 420.1L721.2 436.4 M721.2 436.4L709.1 426.7 M709.1 426.7L721.4 410.4 M758.5 335.5L770.6 345.2 M770.6 345.2L758.3 361.5 M758.3 361.5L746.2 351.8 M746.2 351.8L758.5 335.5 M746.2 351.8L758.3 361.5 M758.3 361.5L746.0 377.8 M746.0 377.8L733.9 368.1 M733.9 368.1L746.2 351.8 M733.9 368.1L746.0 377.8 M746.0 377.8L733.7 394.1 M733.7 394.1L721.6 384.4 M721.6 384.4L733.9 368.1 M721.6 384.4L733.7 394.1 M733.7 394.1L721.4 410.4 M721.4 410.4L709.3 400.7 M709.3 400.7L721.6 384.4 M709.3 400.7L721.4 410.4 M721.4 410.4L709.1 426.7 M709.1 426.7L697.0 417.0 M697.0 417.0L709.3 400.7 M734.1 342.1L746.2 351.8 M746.2 351.8L733.9 368.1 M733.9 368.1L721.8 358.4 M721.8 358.4L734.1 342.1 M721.8 358.4L733.9 368.1 M733.9 368.1L721.6 384.4 M721.6 384.4L709.5 374.7 M709.5 374.7L721.8 358.4 M709.5 374.7L721.6 384.4 M721.6 384.4L709.3 400.7 M709.3 400.7L697.2 391.0 M697.2 391.0L709.5 374.7 M722.0 332.4L734.1 342.1 M734.1 342.1L721.8 358.4 M721.8 358.4L709.7 348.7 M709.7 348.7L722.0 332.4 M819.2 358.0L825.2 362.9 M806.9 374.3L814.2 380.1 M794.6 390.6L801.9 396.4 M745.4 455.8L739.2 464.0 M708.9 452.7L704.0 459.2 M733.3 446.1L729.6 451.0 M722.0 332.4L728.2 324.2 M673.0 396.9L679.7 395.3L684.7 398.6L678.0 407.0L673.0 406.1 M673.0 413.7L679.7 411.2L701.5 427.1L691.4 438.8L684.7 433.8L673.0 430.4 M693.1 444.7L707.4 448.8L709.9 440.5L705.7 436.3L713.2 433.8 M716.6 438.8L723.3 440.5L718.2 457.2L727.4 463.9 M726.6 447.2L722.4 457.2 M673.0 463.9L679.7 463.1L680.6 467.3L687.3 456.4L704.0 473.1L697.3 476.5L688.1 474.0L673.0 491.5 M673.0 485.7L684.7 497.4L704.0 479.0L712.4 500.8L701.5 512.5L684.7 497.4 M684.7 497.4L673.0 510.8 M701.5 512.5L709.9 520.0L718.2 514.1L724.9 505.8L741.7 499.1L748.4 500.8L755.1 510.8L754.2 515.0L750.9 514.1 M701.5 512.5L688.1 525.9L673.0 512.5 M688.1 525.9L699.8 535.9L709.9 520.0 M688.1 525.9L678.0 537.6L673.0 534.2 M678.0 537.6L686.4 546.0L699.8 535.9 M673.0 556.0L680.6 549.3L678.0 537.6 M680.6 549.3L686.4 556.0L679.7 564.4L688.1 572.8 M673.0 567.7L679.7 564.4" stroke="#c8443a" stroke-width="4.1"/><path d="M782.3 406.9L794.4 416.6 M794.4 416.6L782.1 432.9 M782.1 432.9L770.0 423.2 M770.0 423.2L782.3 406.9 M770.0 423.2L782.1 432.9 M782.1 432.9L769.8 449.2 M769.8 449.2L757.7 439.5 M757.7 439.5L770.0 423.2 M757.7 439.5L769.8 449.2 M769.8 449.2L757.5 465.5 M757.5 465.5L745.4 455.8 M745.4 455.8L757.7 439.5 M807.1 348.3L819.2 358.0 M819.2 358.0L806.9 374.3 M806.9 374.3L794.8 364.6 M794.8 364.6L807.1 348.3 M794.8 364.6L806.9 374.3 M806.9 374.3L794.6 390.6 M794.6 390.6L782.5 380.9 M782.5 380.9L794.8 364.6 M782.5 380.9L794.6 390.6 M794.6 390.6L782.3 406.9 M782.3 406.9L770.2 397.2 M770.2 397.2L782.5 380.9 M770.2 397.2L782.3 406.9 M782.3 406.9L770.0 423.2 M770.0 423.2L757.9 413.5 M757.9 413.5L770.2 397.2 M757.9 413.5L770.0 423.2 M770.0 423.2L757.7 439.5 M757.7 439.5L745.6 429.8 M745.6 429.8L757.9 413.5 M745.6 429.8L757.7 439.5 M757.7 439.5L745.4 455.8 M745.4 455.8L733.3 446.1 M733.3 446.1L745.6 429.8 M795.0 338.6L807.1 348.3 M807.1 348.3L794.8 364.6 M794.8 364.6L782.7 354.9 M782.7 354.9L795.0 338.6 M782.7 354.9L794.8 364.6 M794.8 364.6L782.5 380.9 M782.5 380.9L770.4 371.2 M770.4 371.2L782.7 354.9 M770.4 371.2L782.5 380.9 M782.5 380.9L770.2 397.2 M770.2 397.2L758.1 387.5 M758.1 387.5L770.4 371.2 M758.1 387.5L770.2 397.2 M770.2 397.2L757.9 413.5 M757.9 413.5L745.8 403.8 M745.8 403.8L758.1 387.5 M745.8 403.8L757.9 413.5 M757.9 413.5L745.6 429.8 M745.6 429.8L733.5 420.1 M733.5 420.1L745.8 403.8 M733.5 420.1L745.6 429.8 M745.6 429.8L733.3 446.1 M733.3 446.1L721.2 436.4 M721.2 436.4L733.5 420.1 M721.2 436.4L733.3 446.1 M733.3 446.1L721.0 462.4 M721.0 462.4L708.9 452.7 M708.9 452.7L721.2 436.4 M770.6 345.2L782.7 354.9 M782.7 354.9L770.4 371.2 M770.4 371.2L758.3 361.5 M758.3 361.5L770.6 345.2 M758.3 361.5L770.4 371.2 M770.4 371.2L758.1 387.5 M758.1 387.5L746.0 377.8 M746.0 377.8L758.3 361.5 M746.0 377.8L758.1 387.5 M758.1 387.5L745.8 403.8 M733.7 394.1L746.0 377.8 M745.8 403.8L733.5 420.1 M733.5 420.1L721.4 410.4 M721.4 410.4L733.7 394.1 M721.4 410.4L733.5 420.1 M733.5 420.1L721.2 436.4 M721.2 436.4L709.1 426.7 M709.1 426.7L721.4 410.4 M758.5 335.5L770.6 345.2 M770.6 345.2L758.3 361.5 M758.3 361.5L746.2 351.8 M746.2 351.8L758.5 335.5 M746.2 351.8L758.3 361.5 M758.3 361.5L746.0 377.8 M746.0 377.8L733.9 368.1 M733.9 368.1L746.2 351.8 M733.9 368.1L746.0 377.8 M746.0 377.8L733.7 394.1 M733.7 394.1L721.6 384.4 M721.6 384.4L733.9 368.1 M721.6 384.4L733.7 394.1 M733.7 394.1L721.4 410.4 M721.4 410.4L709.3 400.7 M709.3 400.7L721.6 384.4 M709.3 400.7L721.4 410.4 M721.4 410.4L709.1 426.7 M709.1 426.7L697.0 417.0 M697.0 417.0L709.3 400.7 M734.1 342.1L746.2 351.8 M746.2 351.8L733.9 368.1 M733.9 368.1L721.8 358.4 M721.8 358.4L734.1 342.1 M721.8 358.4L733.9 368.1 M733.9 368.1L721.6 384.4 M721.6 384.4L709.5 374.7 M709.5 374.7L721.8 358.4 M709.5 374.7L721.6 384.4 M721.6 384.4L709.3 400.7 M709.3 400.7L697.2 391.0 M697.2 391.0L709.5 374.7 M722.0 332.4L734.1 342.1 M734.1 342.1L721.8 358.4 M721.8 358.4L709.7 348.7 M709.7 348.7L722.0 332.4 M819.2 358.0L825.2 362.9 M806.9 374.3L814.2 380.1 M794.6 390.6L801.9 396.4 M745.4 455.8L739.2 464.0 M708.9 452.7L704.0 459.2 M733.3 446.1L729.6 451.0 M722.0 332.4L728.2 324.2 M673.0 396.9L679.7 395.3L684.7 398.6L678.0 407.0L673.0 406.1 M673.0 413.7L679.7 411.2L701.5 427.1L691.4 438.8L684.7 433.8L673.0 430.4 M693.1 444.7L707.4 448.8L709.9 440.5L705.7 436.3L713.2 433.8 M716.6 438.8L723.3 440.5L718.2 457.2L727.4 463.9 M726.6 447.2L722.4 457.2 M673.0 463.9L679.7 463.1L680.6 467.3L687.3 456.4L704.0 473.1L697.3 476.5L688.1 474.0L673.0 491.5 M673.0 485.7L684.7 497.4L704.0 479.0L712.4 500.8L701.5 512.5L684.7 497.4 M684.7 497.4L673.0 510.8 M701.5 512.5L709.9 520.0L718.2 514.1L724.9 505.8L741.7 499.1L748.4 500.8L755.1 510.8L754.2 515.0L750.9 514.1 M701.5 512.5L688.1 525.9L673.0 512.5 M688.1 525.9L699.8 535.9L709.9 520.0 M688.1 525.9L678.0 537.6L673.0 534.2 M678.0 537.6L686.4 546.0L699.8 535.9 M673.0 556.0L680.6 549.3L678.0 537.6 M680.6 549.3L686.4 556.0L679.7 564.4L688.1 572.8 M673.0 567.7L679.7 564.4" stroke="#fff" stroke-width="2.9"/><path d="M782.7 358.0L791.9 365.4L782.5 377.8L773.3 370.4ZM782.5 384.0L791.7 391.4L782.3 403.8L773.1 396.4Z" stroke="#a83028" stroke-width="0.9"/></g>
<g fill="none" stroke="#c8443a" stroke-width="0.75"><path d="M593.8 358.7L596.7 361.1L595.1 363.2L592.2 360.9Z M589.0 354.1L591.3 356.0L589.7 358.1L587.4 356.3Z M588.9 366.7L591.6 368.9L589.8 371.2L587.1 369.0Z M582.2 375.5L584.3 377.2L582.6 379.5L580.4 377.8Z M582.3 361.8L585.5 364.3L584.0 366.2L580.9 363.6Z M581.0 365.3L583.1 367.0L581.5 369.0L579.5 367.4Z M579.4 368.5L581.5 370.2L579.8 372.5L577.6 370.9Z M576.9 371.1L579.4 373.2L577.6 375.6L575.0 373.5Z M577.2 357.1L579.4 358.9L577.9 360.9L575.7 359.1Z M574.5 358.5L577.9 361.3L576.2 363.5L572.8 360.8Z M573.6 362.0L575.8 363.7L574.5 365.5L572.3 363.8Z M571.6 364.1L574.8 366.7L573.4 368.4L570.2 365.9Z M570.0 366.3L572.8 368.5L571.2 370.7L568.4 368.5Z M570.8 352.3L573.6 354.5L571.9 356.7L569.2 354.5Z M569.0 355.5L572.3 358.1L570.5 360.4L567.2 357.8Z M566.3 358.3L568.9 360.3L567.4 362.3L564.8 360.3Z M561.5 352.0L564.3 354.2L562.7 356.3L559.9 354.1Z M558.2 355.9L560.4 357.6L559.0 359.4L556.9 357.7Z M552.2 352.1L554.5 353.9L552.9 356.0L550.6 354.2Z M575.9 382.2L579.1 384.8L577.6 386.8L574.4 384.3Z M574.8 385.0L577.0 386.7L575.3 388.9L573.1 387.2Z M572.5 387.0L575.6 389.5L574.1 391.6L571.0 389.1Z M571.2 389.5L573.7 391.5L571.9 393.8L569.4 391.8Z M569.8 392.0L572.4 394.1L570.5 396.6L567.9 394.5Z M571.5 378.8L573.7 380.6L571.9 383.1L569.6 381.3Z M568.8 381.3L572.0 383.9L570.1 386.4L566.9 383.9Z M566.3 384.7L569.1 386.9L567.8 388.6L565.0 386.4Z M563.6 373.3L566.3 375.4L564.4 377.9L561.8 375.7Z M561.3 378.2L563.7 380.1L562.2 381.9L559.9 380.0Z M558.0 381.7L560.4 383.6L558.9 385.6L556.5 383.7Z M556.1 371.2L559.0 373.6L557.2 376.0L554.3 373.6Z M553.5 374.4L556.8 377.0L555.5 378.8L552.2 376.1Z M551.8 377.3L555.1 379.9L553.3 382.2L550.1 379.6Z M552.0 363.5L555.1 365.9L553.4 368.0L550.4 365.6Z M550.0 366.4L552.8 368.6L551.0 370.9L548.2 368.7Z M546.0 372.6L548.4 374.5L546.6 376.9L544.2 374.9Z M546.2 358.4L549.5 361.1L548.0 363.1L544.7 360.5Z M545.1 361.1L547.8 363.3L546.1 365.5L543.4 363.3Z M543.4 363.3L546.1 365.5L544.2 368.0L541.5 365.8Z M540.7 365.5L544.1 368.1L542.7 370.0L539.3 367.3Z M538.9 367.9L542.1 370.4L540.8 372.2L537.6 369.6Z M540.0 353.6L542.7 355.8L541.3 357.6L538.7 355.4Z M538.8 355.9L541.9 358.4L540.0 360.9L536.9 358.4Z M536.9 358.7L539.3 360.6L538.0 362.4L535.6 360.4Z M535.1 360.5L537.3 362.2L535.4 364.7L533.3 362.9Z M533.3 362.9L535.6 364.8L533.9 367.1L531.5 365.2Z M531.5 354.2L533.5 355.9L532.1 357.8L530.0 356.1Z M529.8 356.2L532.0 357.9L530.0 360.4L527.9 358.7Z M527.3 358.5L529.5 360.2L528.1 362.1L525.9 360.4Z M521.8 353.1L523.9 354.8L522.1 357.3L519.9 355.6Z M564.3 399.9L566.5 401.8L564.7 404.3L562.4 402.4Z M560.9 403.9L563.2 405.7L561.6 407.7L559.3 405.9Z M557.9 407.4L561.1 409.9L559.2 412.5L556.0 409.9Z M555.3 399.4L557.6 401.2L556.0 403.3L553.7 401.4Z M552.3 403.3L555.5 405.9L554.0 407.9L550.8 405.3Z M552.4 389.7L554.8 391.6L553.4 393.4L551.1 391.6Z M549.7 391.4L552.8 393.8L551.5 395.6L548.4 393.1Z M547.7 393.7L550.9 396.2L549.7 397.8L546.5 395.3Z M546.3 396.3L549.0 398.4L547.7 400.1L545.1 398.0Z M545.3 398.6L548.1 400.8L546.2 403.3L543.4 401.1Z M546.9 385.8L549.2 387.6L547.8 389.5L545.5 387.6Z M541.7 390.9L545.1 393.7L543.7 395.6L540.3 392.9Z M540.4 380.4L542.9 382.4L541.4 384.5L538.8 382.4Z M537.7 383.3L540.5 385.5L539.2 387.1L536.5 384.9Z M535.7 386.4L538.3 388.4L537.1 390.1L534.5 388.0Z M534.5 375.3L537.8 378.0L536.0 380.4L532.6 377.7Z M531.5 377.9L534.6 380.4L533.0 382.5L529.9 380.0Z M529.5 381.2L532.3 383.4L530.9 385.3L528.1 383.1Z M527.8 384.2L531.0 386.8L529.3 389.1L526.1 386.5Z M522.7 365.5L530.5 371.8L526.7 376.9L518.8 370.6Z M521.1 375.7L525.7 379.4L521.8 384.6L517.2 380.9Z M515.4 373.4L518.7 376.0L516.8 378.4L513.5 375.8Z M510.2 355.5L518.8 362.4L514.9 367.5L506.3 360.7Z M508.8 366.7L513.0 370.1L509.9 374.2L505.6 370.8Z M503.9 363.0L507.0 365.5L504.1 369.4L501.0 366.9Z M500.4 349.8L503.9 352.6L501.1 356.3L503.0 357.8L499.0 363.1L493.6 358.8Z M490.7 354.0L493.5 356.3L492.2 358.2L489.3 355.9Z M552.1 415.3L554.8 417.5L553.1 419.7L550.4 417.6Z M549.8 417.7L552.7 420.0L551.5 421.7L548.5 419.4Z M548.4 420.1L551.5 422.6L550.0 424.5L547.0 422.0Z M547.3 423.1L549.4 424.8L548.0 426.6L545.9 424.9Z M544.5 424.5L547.5 426.9L546.0 428.8L543.1 426.4Z M546.6 411.2L548.8 412.9L546.9 415.4L544.7 413.6Z M543.0 413.7L546.3 416.4L545.1 418.0L541.8 415.3Z M541.1 416.5L544.5 419.2L542.9 421.3L539.5 418.5Z M539.4 420.1L542.7 422.7L541.4 424.5L538.0 421.8Z M540.0 406.1L542.5 408.1L540.9 410.3L538.3 408.3Z M537.8 409.3L540.0 411.0L538.6 413.0L536.4 411.2Z M534.8 411.7L537.4 413.8L536.0 415.5L533.5 413.4Z M533.0 414.5L535.6 416.6L533.8 418.9L531.2 416.8Z M534.0 401.3L537.2 403.9L536.0 405.5L532.8 402.9Z M532.6 403.2L534.8 405.0L532.9 407.5L530.7 405.7Z M530.4 405.7L532.9 407.7L531.4 409.6L529.0 407.7Z M528.4 407.8L531.2 410.1L529.8 412.0L526.9 409.8Z M527.6 411.2L529.7 412.8L528.4 414.5L526.3 412.8Z M526.4 395.0L530.9 398.6L528.6 401.6L524.1 398.0Z M523.6 399.1L527.8 402.5L525.3 405.8L521.1 402.4Z M518.5 395.2L522.0 398.1L519.7 401.1L517.9 399.7L518.9 398.5L517.1 397.1Z M520.5 402.4L525.4 406.4L522.2 410.7L517.2 406.7Z M515.2 399.7L518.6 402.5L516.8 404.9L513.3 402.1Z M512.8 384.4L516.2 387.2L513.7 390.5L516.1 392.4L510.4 399.9L504.6 395.2Z M508.0 382.9L510.5 384.9L508.9 387.0L506.5 385.0Z M503.8 388.7L506.1 390.5L504.3 393.0L502.0 391.1Z M502.5 375.7L506.6 379.0L504.2 382.2L500.1 378.8Z M497.3 372.0L500.7 374.7L498.7 377.3L495.3 374.6Z M499.8 379.8L503.4 382.7L500.7 386.3L497.1 383.4Z M496.2 383.7L500.6 387.2L498.0 390.7L493.6 387.2Z M491.2 379.9L494.7 382.8L492.4 385.9L488.9 383.0Z M488.9 365.5L491.8 367.8L488.8 371.8L490.9 373.4L485.9 380.0L480.9 376.1Z M483.7 363.4L486.5 365.6L484.8 367.7L482.1 365.5Z M479.5 369.3L481.9 371.3L480.2 373.5L477.8 371.6Z M476.1 356.5L479.2 359.0L475.8 363.4L477.9 365.1L474.5 369.6L469.3 365.5Z M539.0 432.2L542.2 434.6L540.4 437.0L537.3 434.5Z M536.6 436.3L538.7 438.0L536.8 440.5L534.7 438.8Z M533.1 440.2L535.8 442.4L534.3 444.4L531.6 442.3Z M533.4 428.1L536.7 430.8L535.5 432.5L532.1 429.8Z M530.2 431.3L533.5 433.9L531.6 436.3L528.4 433.8Z M525.4 421.9L530.1 425.7L527.7 428.8L523.0 425.0Z M520.9 428.1L525.4 431.7L522.9 435.0L518.4 431.4Z M516.5 424.5L519.2 426.7L516.6 430.1L513.9 427.9Z M514.6 412.9L516.9 414.8L515.5 416.6L513.2 414.8Z M512.5 417.0L515.3 419.3L513.4 421.8L510.6 419.6Z M508.8 420.9L512.0 423.5L510.6 425.3L507.4 422.7Z M510.2 408.4L512.8 410.5L511.2 412.7L508.6 410.6Z M504.6 413.7L507.5 416.1L506.3 417.8L503.3 415.4Z M503.2 417.0L505.7 419.0L504.2 421.1L501.6 419.0Z M496.0 400.2L499.4 402.9L500.9 400.9L506.0 404.9L502.5 409.5L494.1 402.7Z M496.6 408.4L501.0 412.0L497.1 417.1L492.7 413.6Z M491.7 405.5L494.3 407.6L491.3 411.5L488.7 409.4Z M487.8 391.6L493.8 396.4L489.8 401.6L487.5 399.7L484.2 404.0L480.6 401.1Z M483.5 389.3L486.4 391.6L484.7 393.8L481.8 391.5Z M479.3 395.6L481.5 397.3L480.0 399.3L477.8 397.5Z M476.7 380.9L480.2 383.7L476.9 388.2L479.0 389.9L473.5 397.3L467.8 392.7Z M471.2 379.7L474.2 382.1L472.7 384.0L469.8 381.6Z M467.2 386.0L469.3 387.6L467.9 389.5L465.8 387.8Z M526.2 447.1L530.4 450.5L528.1 453.5L523.9 450.1Z M521.7 443.5L524.2 445.5L521.9 448.6L519.4 446.6Z M523.3 450.7L527.7 454.2L524.7 458.2L520.3 454.7Z M518.0 447.3L521.6 450.1L519.4 453.0L515.8 450.2Z M520.6 455.1L524.2 458.1L521.2 462.0L517.6 459.1Z M515.2 451.5L518.3 454.0L516.0 457.1L512.8 454.6Z M514.6 437.5L518.1 440.3L515.5 443.8L512.0 440.9Z M510.6 441.4L515.4 445.2L513.2 448.1L508.5 444.3Z M505.7 439.1L506.9 440.1L508.1 438.5L509.3 439.5L506.4 443.4L503.9 441.4Z M507.6 445.2L512.5 449.2L510.0 452.5L505.1 448.6Z M502.8 441.4L506.7 444.4L505.1 446.5L503.2 444.9L502.2 446.3L500.3 444.8Z M502.7 427.5L506.2 430.3L503.2 434.3L499.7 431.5Z M499.2 431.1L503.7 434.7L500.4 439.0L495.9 435.4Z M494.3 428.1L497.0 430.3L494.7 433.4L492.0 431.3Z M495.5 435.5L500.5 439.5L497.9 442.9L492.9 438.9Z M491.1 432.1L494.1 434.5L491.7 437.7L488.7 435.3Z M488.2 416.8L491.1 419.1L487.3 424.2L490.3 426.6L485.8 432.7L479.8 427.9Z M484.0 414.3L486.9 416.6L485.2 418.8L482.4 416.5Z M481.2 418.2L483.9 420.4L482.2 422.8L479.4 420.5Z M478.3 422.3L480.8 424.3L479.2 426.5L476.7 424.5Z M476.3 407.5L479.3 409.9L475.9 414.3L478.3 416.2L473.5 422.6L468.1 418.4Z M472.1 404.4L475.0 406.7L472.9 409.4L470.1 407.1Z M469.1 409.0L471.4 410.8L470.0 412.6L467.7 410.8Z M466.4 412.7L468.5 414.4L466.8 416.7L464.7 415.0Z M461.3 395.4L466.0 399.2L464.5 401.2L467.7 403.7L465.9 406.1L458.0 399.8Z M460.1 405.2L464.5 408.7L460.5 414.1L456.1 410.6Z M455.2 402.5L457.7 404.5L454.8 408.3L452.4 406.3Z M515.3 464.3L518.1 466.5L516.4 468.8L513.7 466.5Z M512.4 469.4L514.5 471.0L512.6 473.4L510.6 471.8Z M509.1 460.0L512.3 462.6L510.8 464.6L507.6 462.0Z M506.3 462.7L509.7 465.4L508.4 467.1L505.0 464.4Z M504.9 466.0L507.2 467.9L505.7 469.9L503.4 468.0Z M497.5 450.9L504.9 456.8L503.2 459.0L500.3 456.6L498.9 458.4L494.4 454.9Z M496.3 461.0L500.0 464.0L496.6 468.5L492.9 465.5Z M490.7 457.5L494.0 460.2L491.5 463.4L488.2 460.8Z M490.3 445.6L492.6 447.4L491.0 449.5L488.8 447.7Z M487.7 449.5L490.1 451.4L488.2 453.9L485.8 452.0Z M484.8 453.6L486.9 455.3L485.2 457.6L483.1 455.9Z M485.4 440.7L488.5 443.2L486.8 445.6L483.7 443.1Z M483.2 443.5L485.8 445.6L483.9 448.1L481.3 446.0Z M481.1 447.2L483.3 448.9L482.0 450.6L479.8 448.9Z M478.2 449.6L481.3 452.1L480.0 453.8L476.9 451.3Z M478.5 435.3L480.6 437.0L479.0 439.2L476.8 437.4Z M476.5 438.6L478.7 440.4L477.3 442.3L475.1 440.5Z M474.0 441.2L476.1 442.9L474.6 445.0L472.4 443.2Z M471.5 444.2L473.8 446.0L472.5 447.8L470.2 445.9Z M473.1 431.5L475.2 433.2L473.3 435.7L471.2 434.0Z M469.3 434.8L472.2 437.1L470.4 439.5L467.5 437.2Z M466.6 439.2L468.9 441.1L467.4 443.1L465.1 441.2Z M465.7 424.7L469.5 427.8L467.1 430.9L463.4 427.9Z M460.7 420.8L462.2 422.0L461.3 423.2L462.9 424.5L461.6 426.3L458.4 423.8Z M462.4 427.9L467.4 431.9L464.3 436.0L459.3 432.0Z M457.5 424.3L461.3 427.3L458.4 431.0L454.7 428.1Z M459.2 432.6L463.7 436.2L461.2 439.6L456.7 435.9Z M454.8 428.7L457.8 431.1L455.0 434.9L451.9 432.5Z M449.1 411.8L456.7 417.9L454.9 420.3L451.9 417.9L450.4 419.8L445.8 416.2Z M447.8 422.0L451.8 425.2L448.3 429.9L444.2 426.7Z M446.8 475.8L452.2 480.2L450.7 482.2L448.5 480.4L447.0 482.4L443.8 479.8Z M459.5 480.2L463.4 483.4L458.5 489.8L454.6 486.6Z M450.7 488.9L453.1 490.7L451.3 493.1L448.9 491.3Z M456.5 492.8L459.2 495.0L457.5 497.2L454.8 495.0Z M470.1 485.2L482.6 495.2L479.9 498.8L467.4 488.8Z M465.2 481.4L468.4 483.9L464.8 488.6L461.6 486.1Z M481.7 484.9L484.1 486.7L482.3 489.1L479.9 487.3Z M447.5 500.0L450.0 502.0L448.5 504.0L446.0 502.0Z M452.5 503.0L455.0 505.0L453.5 507.0L451.0 505.0Z M457.5 498.9L460.1 501.0L458.5 503.1L455.9 501.0Z M462.5 501.9L465.1 504.0L463.5 506.1L460.9 504.0Z M467.5 504.9L470.1 507.0L468.5 509.1L465.9 507.0Z M472.5 507.9L475.1 510.0L473.5 512.1L470.9 510.0Z M448.5 509.0L451.0 511.0L449.5 513.0L447.0 511.0Z M453.5 512.0L456.0 514.0L454.5 516.0L452.0 514.0Z M458.5 515.0L461.0 517.0L459.5 519.0L457.0 517.0Z M464.5 513.0L467.0 515.0L465.5 517.0L463.0 515.0Z M469.5 517.0L472.0 519.0L470.5 521.0L468.0 519.0Z M481.0 508.5L483.6 510.7L477.0 519.5L474.4 517.3Z M483.8 505.1L485.8 506.8L484.2 508.9L482.2 507.2Z M451.5 521.0L454.0 523.0L452.5 525.0L450.0 523.0Z M456.5 524.0L459.0 526.0L457.5 528.0L455.0 526.0Z M461.5 527.0L464.0 529.0L462.5 531.0L460.0 529.0Z M467.5 525.0L470.0 527.0L468.5 529.0L466.0 527.0Z M475.5 526.0L478.0 528.0L476.5 530.0L474.0 528.0Z M479.5 523.0L482.0 525.0L480.5 527.0L478.0 525.0Z M465.5 535.0L468.0 537.0L466.5 539.0L464.0 537.0Z M469.5 532.0L472.0 534.0L470.5 536.0L468.0 534.0Z M473.5 538.0L476.0 540.0L474.5 542.0L472.0 540.0Z M477.5 534.0L480.0 536.0L478.5 538.0L476.0 536.0Z M481.5 530.0L484.0 532.0L482.5 534.0L480.0 532.0Z M485.5 527.0L488.0 529.0L486.5 531.0L484.0 529.0Z M454.4 534.0L461.4 539.6L457.5 544.8L453.6 541.7L449.7 546.9L446.6 544.4Z M446.0 540.8L448.1 542.4L446.0 545.2L443.9 543.6Z M466.7 550.5L469.4 552.7L467.3 555.5L464.6 553.3Z M447.6 554.7L450.0 556.5L446.4 561.3L444.0 559.5Z M484.7 487.9L487.1 489.7L485.3 492.1L482.9 490.3Z M525.8 481.0L527.9 482.8L526.2 485.0L524.1 483.2Z M485.5 493.8L488.2 495.9L486.5 498.2L483.8 496.1Z"/><ellipse cx="447.0" cy="391.0" rx="1.9" ry="1.4" transform="rotate(-37 447.0 391.0)"/><ellipse cx="451.5" cy="390.5" rx="1.9" ry="1.4" transform="rotate(-47 451.5 390.5)"/><ellipse cx="456.0" cy="389.5" rx="1.9" ry="1.4" transform="rotate(-41 456.0 389.5)"/><ellipse cx="460.5" cy="388.0" rx="1.9" ry="1.4" transform="rotate(-25 460.5 388.0)"/><ellipse cx="464.5" cy="385.5" rx="1.9" ry="1.4" transform="rotate(-12 464.5 385.5)"/><ellipse cx="468.0" cy="382.5" rx="1.9" ry="1.4" transform="rotate(-38 468.0 382.5)"/><ellipse cx="470.5" cy="378.5" rx="1.9" ry="1.4" transform="rotate(-29 470.5 378.5)"/><ellipse cx="472.0" cy="374.5" rx="1.9" ry="1.4" transform="rotate(-38 472.0 374.5)"/><ellipse cx="450.0" cy="380.0" rx="1.9" ry="1.4" transform="rotate(-11 450.0 380.0)"/><ellipse cx="454.0" cy="377.5" rx="1.9" ry="1.4" transform="rotate(-15 454.0 377.5)"/><ellipse cx="457.0" cy="374.0" rx="1.9" ry="1.4" transform="rotate(-13 457.0 374.0)"/><ellipse cx="458.0" cy="369.0" rx="1.9" ry="1.4" transform="rotate(-14 458.0 369.0)"/><ellipse cx="458.5" cy="363.0" rx="1.9" ry="1.4" transform="rotate(-21 458.5 363.0)"/><ellipse cx="458.0" cy="358.5" rx="1.9" ry="1.4" transform="rotate(-20 458.0 358.5)"/><ellipse cx="471.0" cy="359.0" rx="1.9" ry="1.4" transform="rotate(-41 471.0 359.0)"/><ellipse cx="473.5" cy="363.0" rx="1.9" ry="1.4" transform="rotate(-38 473.5 363.0)"/><ellipse cx="472.5" cy="368.0" rx="1.9" ry="1.4" transform="rotate(-25 472.5 368.0)"/></g>
<g clip-path="url(#cBR)"><g transform="translate(236.5,294)" fill="none" stroke="#2a2ab0" stroke-width="0.75"><path d="M593.8 358.7L596.7 361.1L595.1 363.2L592.2 360.9Z M589.0 354.1L591.3 356.0L589.7 358.1L587.4 356.3Z M588.9 366.7L591.6 368.9L589.8 371.2L587.1 369.0Z M582.2 375.5L584.3 377.2L582.6 379.5L580.4 377.8Z M582.3 361.8L585.5 364.3L584.0 366.2L580.9 363.6Z M581.0 365.3L583.1 367.0L581.5 369.0L579.5 367.4Z M579.4 368.5L581.5 370.2L579.8 372.5L577.6 370.9Z M576.9 371.1L579.4 373.2L577.6 375.6L575.0 373.5Z M577.2 357.1L579.4 358.9L577.9 360.9L575.7 359.1Z M574.5 358.5L577.9 361.3L576.2 363.5L572.8 360.8Z M573.6 362.0L575.8 363.7L574.5 365.5L572.3 363.8Z M571.6 364.1L574.8 366.7L573.4 368.4L570.2 365.9Z M570.0 366.3L572.8 368.5L571.2 370.7L568.4 368.5Z M570.8 352.3L573.6 354.5L571.9 356.7L569.2 354.5Z M569.0 355.5L572.3 358.1L570.5 360.4L567.2 357.8Z M566.3 358.3L568.9 360.3L567.4 362.3L564.8 360.3Z M561.5 352.0L564.3 354.2L562.7 356.3L559.9 354.1Z M558.2 355.9L560.4 357.6L559.0 359.4L556.9 357.7Z M552.2 352.1L554.5 353.9L552.9 356.0L550.6 354.2Z M575.9 382.2L579.1 384.8L577.6 386.8L574.4 384.3Z M574.8 385.0L577.0 386.7L575.3 388.9L573.1 387.2Z M572.5 387.0L575.6 389.5L574.1 391.6L571.0 389.1Z M571.2 389.5L573.7 391.5L571.9 393.8L569.4 391.8Z M569.8 392.0L572.4 394.1L570.5 396.6L567.9 394.5Z M571.5 378.8L573.7 380.6L571.9 383.1L569.6 381.3Z M568.8 381.3L572.0 383.9L570.1 386.4L566.9 383.9Z M566.3 384.7L569.1 386.9L567.8 388.6L565.0 386.4Z M563.6 373.3L566.3 375.4L564.4 377.9L561.8 375.7Z M561.3 378.2L563.7 380.1L562.2 381.9L559.9 380.0Z M558.0 381.7L560.4 383.6L558.9 385.6L556.5 383.7Z M556.1 371.2L559.0 373.6L557.2 376.0L554.3 373.6Z M553.5 374.4L556.8 377.0L555.5 378.8L552.2 376.1Z M551.8 377.3L555.1 379.9L553.3 382.2L550.1 379.6Z M552.0 363.5L555.1 365.9L553.4 368.0L550.4 365.6Z M550.0 366.4L552.8 368.6L551.0 370.9L548.2 368.7Z M546.0 372.6L548.4 374.5L546.6 376.9L544.2 374.9Z M546.2 358.4L549.5 361.1L548.0 363.1L544.7 360.5Z M545.1 361.1L547.8 363.3L546.1 365.5L543.4 363.3Z M543.4 363.3L546.1 365.5L544.2 368.0L541.5 365.8Z M540.7 365.5L544.1 368.1L542.7 370.0L539.3 367.3Z M538.9 367.9L542.1 370.4L540.8 372.2L537.6 369.6Z M540.0 353.6L542.7 355.8L541.3 357.6L538.7 355.4Z M538.8 355.9L541.9 358.4L540.0 360.9L536.9 358.4Z M536.9 358.7L539.3 360.6L538.0 362.4L535.6 360.4Z M535.1 360.5L537.3 362.2L535.4 364.7L533.3 362.9Z M533.3 362.9L535.6 364.8L533.9 367.1L531.5 365.2Z M531.5 354.2L533.5 355.9L532.1 357.8L530.0 356.1Z M529.8 356.2L532.0 357.9L530.0 360.4L527.9 358.7Z M527.3 358.5L529.5 360.2L528.1 362.1L525.9 360.4Z M521.8 353.1L523.9 354.8L522.1 357.3L519.9 355.6Z M564.3 399.9L566.5 401.8L564.7 404.3L562.4 402.4Z M560.9 403.9L563.2 405.7L561.6 407.7L559.3 405.9Z M557.9 407.4L561.1 409.9L559.2 412.5L556.0 409.9Z M555.3 399.4L557.6 401.2L556.0 403.3L553.7 401.4Z M552.3 403.3L555.5 405.9L554.0 407.9L550.8 405.3Z M552.4 389.7L554.8 391.6L553.4 393.4L551.1 391.6Z M549.7 391.4L552.8 393.8L551.5 395.6L548.4 393.1Z M547.7 393.7L550.9 396.2L549.7 397.8L546.5 395.3Z M546.3 396.3L549.0 398.4L547.7 400.1L545.1 398.0Z M545.3 398.6L548.1 400.8L546.2 403.3L543.4 401.1Z M546.9 385.8L549.2 387.6L547.8 389.5L545.5 387.6Z M541.7 390.9L545.1 393.7L543.7 395.6L540.3 392.9Z M540.4 380.4L542.9 382.4L541.4 384.5L538.8 382.4Z M537.7 383.3L540.5 385.5L539.2 387.1L536.5 384.9Z M535.7 386.4L538.3 388.4L537.1 390.1L534.5 388.0Z M534.5 375.3L537.8 378.0L536.0 380.4L532.6 377.7Z M531.5 377.9L534.6 380.4L533.0 382.5L529.9 380.0Z M529.5 381.2L532.3 383.4L530.9 385.3L528.1 383.1Z M527.8 384.2L531.0 386.8L529.3 389.1L526.1 386.5Z M522.7 365.5L530.5 371.8L526.7 376.9L518.8 370.6Z M521.1 375.7L525.7 379.4L521.8 384.6L517.2 380.9Z M515.4 373.4L518.7 376.0L516.8 378.4L513.5 375.8Z M510.2 355.5L518.8 362.4L514.9 367.5L506.3 360.7Z M508.8 366.7L513.0 370.1L509.9 374.2L505.6 370.8Z M503.9 363.0L507.0 365.5L504.1 369.4L501.0 366.9Z M500.4 349.8L503.9 352.6L501.1 356.3L503.0 357.8L499.0 363.1L493.6 358.8Z M490.7 354.0L493.5 356.3L492.2 358.2L489.3 355.9Z M552.1 415.3L554.8 417.5L553.1 419.7L550.4 417.6Z M549.8 417.7L552.7 420.0L551.5 421.7L548.5 419.4Z M548.4 420.1L551.5 422.6L550.0 424.5L547.0 422.0Z M547.3 423.1L549.4 424.8L548.0 426.6L545.9 424.9Z M544.5 424.5L547.5 426.9L546.0 428.8L543.1 426.4Z M546.6 411.2L548.8 412.9L546.9 415.4L544.7 413.6Z M543.0 413.7L546.3 416.4L545.1 418.0L541.8 415.3Z M541.1 416.5L544.5 419.2L542.9 421.3L539.5 418.5Z M539.4 420.1L542.7 422.7L541.4 424.5L538.0 421.8Z M540.0 406.1L542.5 408.1L540.9 410.3L538.3 408.3Z M537.8 409.3L540.0 411.0L538.6 413.0L536.4 411.2Z M534.8 411.7L537.4 413.8L536.0 415.5L533.5 413.4Z M533.0 414.5L535.6 416.6L533.8 418.9L531.2 416.8Z M534.0 401.3L537.2 403.9L536.0 405.5L532.8 402.9Z M532.6 403.2L534.8 405.0L532.9 407.5L530.7 405.7Z M530.4 405.7L532.9 407.7L531.4 409.6L529.0 407.7Z M528.4 407.8L531.2 410.1L529.8 412.0L526.9 409.8Z M527.6 411.2L529.7 412.8L528.4 414.5L526.3 412.8Z M526.4 395.0L530.9 398.6L528.6 401.6L524.1 398.0Z M523.6 399.1L527.8 402.5L525.3 405.8L521.1 402.4Z M518.5 395.2L522.0 398.1L519.7 401.1L517.9 399.7L518.9 398.5L517.1 397.1Z M520.5 402.4L525.4 406.4L522.2 410.7L517.2 406.7Z M515.2 399.7L518.6 402.5L516.8 404.9L513.3 402.1Z M512.8 384.4L516.2 387.2L513.7 390.5L516.1 392.4L510.4 399.9L504.6 395.2Z M508.0 382.9L510.5 384.9L508.9 387.0L506.5 385.0Z M503.8 388.7L506.1 390.5L504.3 393.0L502.0 391.1Z M502.5 375.7L506.6 379.0L504.2 382.2L500.1 378.8Z M497.3 372.0L500.7 374.7L498.7 377.3L495.3 374.6Z M499.8 379.8L503.4 382.7L500.7 386.3L497.1 383.4Z M496.2 383.7L500.6 387.2L498.0 390.7L493.6 387.2Z M491.2 379.9L494.7 382.8L492.4 385.9L488.9 383.0Z M488.9 365.5L491.8 367.8L488.8 371.8L490.9 373.4L485.9 380.0L480.9 376.1Z M483.7 363.4L486.5 365.6L484.8 367.7L482.1 365.5Z M479.5 369.3L481.9 371.3L480.2 373.5L477.8 371.6Z M476.1 356.5L479.2 359.0L475.8 363.4L477.9 365.1L474.5 369.6L469.3 365.5Z M539.0 432.2L542.2 434.6L540.4 437.0L537.3 434.5Z M536.6 436.3L538.7 438.0L536.8 440.5L534.7 438.8Z M533.1 440.2L535.8 442.4L534.3 444.4L531.6 442.3Z M533.4 428.1L536.7 430.8L535.5 432.5L532.1 429.8Z M530.2 431.3L533.5 433.9L531.6 436.3L528.4 433.8Z M525.4 421.9L530.1 425.7L527.7 428.8L523.0 425.0Z M520.9 428.1L525.4 431.7L522.9 435.0L518.4 431.4Z M516.5 424.5L519.2 426.7L516.6 430.1L513.9 427.9Z M514.6 412.9L516.9 414.8L515.5 416.6L513.2 414.8Z M512.5 417.0L515.3 419.3L513.4 421.8L510.6 419.6Z M508.8 420.9L512.0 423.5L510.6 425.3L507.4 422.7Z M510.2 408.4L512.8 410.5L511.2 412.7L508.6 410.6Z M504.6 413.7L507.5 416.1L506.3 417.8L503.3 415.4Z M503.2 417.0L505.7 419.0L504.2 421.1L501.6 419.0Z M496.0 400.2L499.4 402.9L500.9 400.9L506.0 404.9L502.5 409.5L494.1 402.7Z M496.6 408.4L501.0 412.0L497.1 417.1L492.7 413.6Z M491.7 405.5L494.3 407.6L491.3 411.5L488.7 409.4Z M487.8 391.6L493.8 396.4L489.8 401.6L487.5 399.7L484.2 404.0L480.6 401.1Z M483.5 389.3L486.4 391.6L484.7 393.8L481.8 391.5Z M479.3 395.6L481.5 397.3L480.0 399.3L477.8 397.5Z M476.7 380.9L480.2 383.7L476.9 388.2L479.0 389.9L473.5 397.3L467.8 392.7Z M471.2 379.7L474.2 382.1L472.7 384.0L469.8 381.6Z M467.2 386.0L469.3 387.6L467.9 389.5L465.8 387.8Z M526.2 447.1L530.4 450.5L528.1 453.5L523.9 450.1Z M521.7 443.5L524.2 445.5L521.9 448.6L519.4 446.6Z M523.3 450.7L527.7 454.2L524.7 458.2L520.3 454.7Z M518.0 447.3L521.6 450.1L519.4 453.0L515.8 450.2Z M520.6 455.1L524.2 458.1L521.2 462.0L517.6 459.1Z M515.2 451.5L518.3 454.0L516.0 457.1L512.8 454.6Z M514.6 437.5L518.1 440.3L515.5 443.8L512.0 440.9Z M510.6 441.4L515.4 445.2L513.2 448.1L508.5 444.3Z M505.7 439.1L506.9 440.1L508.1 438.5L509.3 439.5L506.4 443.4L503.9 441.4Z M507.6 445.2L512.5 449.2L510.0 452.5L505.1 448.6Z M502.8 441.4L506.7 444.4L505.1 446.5L503.2 444.9L502.2 446.3L500.3 444.8Z M502.7 427.5L506.2 430.3L503.2 434.3L499.7 431.5Z M499.2 431.1L503.7 434.7L500.4 439.0L495.9 435.4Z M494.3 428.1L497.0 430.3L494.7 433.4L492.0 431.3Z M495.5 435.5L500.5 439.5L497.9 442.9L492.9 438.9Z M491.1 432.1L494.1 434.5L491.7 437.7L488.7 435.3Z M488.2 416.8L491.1 419.1L487.3 424.2L490.3 426.6L485.8 432.7L479.8 427.9Z M484.0 414.3L486.9 416.6L485.2 418.8L482.4 416.5Z M481.2 418.2L483.9 420.4L482.2 422.8L479.4 420.5Z M478.3 422.3L480.8 424.3L479.2 426.5L476.7 424.5Z M476.3 407.5L479.3 409.9L475.9 414.3L478.3 416.2L473.5 422.6L468.1 418.4Z M472.1 404.4L475.0 406.7L472.9 409.4L470.1 407.1Z M469.1 409.0L471.4 410.8L470.0 412.6L467.7 410.8Z M466.4 412.7L468.5 414.4L466.8 416.7L464.7 415.0Z M461.3 395.4L466.0 399.2L464.5 401.2L467.7 403.7L465.9 406.1L458.0 399.8Z M460.1 405.2L464.5 408.7L460.5 414.1L456.1 410.6Z M455.2 402.5L457.7 404.5L454.8 408.3L452.4 406.3Z M515.3 464.3L518.1 466.5L516.4 468.8L513.7 466.5Z M512.4 469.4L514.5 471.0L512.6 473.4L510.6 471.8Z M509.1 460.0L512.3 462.6L510.8 464.6L507.6 462.0Z M506.3 462.7L509.7 465.4L508.4 467.1L505.0 464.4Z M504.9 466.0L507.2 467.9L505.7 469.9L503.4 468.0Z M497.5 450.9L504.9 456.8L503.2 459.0L500.3 456.6L498.9 458.4L494.4 454.9Z M496.3 461.0L500.0 464.0L496.6 468.5L492.9 465.5Z M490.7 457.5L494.0 460.2L491.5 463.4L488.2 460.8Z M490.3 445.6L492.6 447.4L491.0 449.5L488.8 447.7Z M487.7 449.5L490.1 451.4L488.2 453.9L485.8 452.0Z M484.8 453.6L486.9 455.3L485.2 457.6L483.1 455.9Z M485.4 440.7L488.5 443.2L486.8 445.6L483.7 443.1Z M483.2 443.5L485.8 445.6L483.9 448.1L481.3 446.0Z M481.1 447.2L483.3 448.9L482.0 450.6L479.8 448.9Z M478.2 449.6L481.3 452.1L480.0 453.8L476.9 451.3Z M478.5 435.3L480.6 437.0L479.0 439.2L476.8 437.4Z M476.5 438.6L478.7 440.4L477.3 442.3L475.1 440.5Z M474.0 441.2L476.1 442.9L474.6 445.0L472.4 443.2Z M471.5 444.2L473.8 446.0L472.5 447.8L470.2 445.9Z M473.1 431.5L475.2 433.2L473.3 435.7L471.2 434.0Z M469.3 434.8L472.2 437.1L470.4 439.5L467.5 437.2Z M466.6 439.2L468.9 441.1L467.4 443.1L465.1 441.2Z M465.7 424.7L469.5 427.8L467.1 430.9L463.4 427.9Z M460.7 420.8L462.2 422.0L461.3 423.2L462.9 424.5L461.6 426.3L458.4 423.8Z M462.4 427.9L467.4 431.9L464.3 436.0L459.3 432.0Z M457.5 424.3L461.3 427.3L458.4 431.0L454.7 428.1Z M459.2 432.6L463.7 436.2L461.2 439.6L456.7 435.9Z M454.8 428.7L457.8 431.1L455.0 434.9L451.9 432.5Z M449.1 411.8L456.7 417.9L454.9 420.3L451.9 417.9L450.4 419.8L445.8 416.2Z M447.8 422.0L451.8 425.2L448.3 429.9L444.2 426.7Z M446.8 475.8L452.2 480.2L450.7 482.2L448.5 480.4L447.0 482.4L443.8 479.8Z M459.5 480.2L463.4 483.4L458.5 489.8L454.6 486.6Z M450.7 488.9L453.1 490.7L451.3 493.1L448.9 491.3Z M456.5 492.8L459.2 495.0L457.5 497.2L454.8 495.0Z M470.1 485.2L482.6 495.2L479.9 498.8L467.4 488.8Z M465.2 481.4L468.4 483.9L464.8 488.6L461.6 486.1Z M481.7 484.9L484.1 486.7L482.3 489.1L479.9 487.3Z M447.5 500.0L450.0 502.0L448.5 504.0L446.0 502.0Z M452.5 503.0L455.0 505.0L453.5 507.0L451.0 505.0Z M457.5 498.9L460.1 501.0L458.5 503.1L455.9 501.0Z M462.5 501.9L465.1 504.0L463.5 506.1L460.9 504.0Z M467.5 504.9L470.1 507.0L468.5 509.1L465.9 507.0Z M472.5 507.9L475.1 510.0L473.5 512.1L470.9 510.0Z M448.5 509.0L451.0 511.0L449.5 513.0L447.0 511.0Z M453.5 512.0L456.0 514.0L454.5 516.0L452.0 514.0Z M458.5 515.0L461.0 517.0L459.5 519.0L457.0 517.0Z M464.5 513.0L467.0 515.0L465.5 517.0L463.0 515.0Z M469.5 517.0L472.0 519.0L470.5 521.0L468.0 519.0Z M481.0 508.5L483.6 510.7L477.0 519.5L474.4 517.3Z M483.8 505.1L485.8 506.8L484.2 508.9L482.2 507.2Z M451.5 521.0L454.0 523.0L452.5 525.0L450.0 523.0Z M456.5 524.0L459.0 526.0L457.5 528.0L455.0 526.0Z M461.5 527.0L464.0 529.0L462.5 531.0L460.0 529.0Z M467.5 525.0L470.0 527.0L468.5 529.0L466.0 527.0Z M475.5 526.0L478.0 528.0L476.5 530.0L474.0 528.0Z M479.5 523.0L482.0 525.0L480.5 527.0L478.0 525.0Z M465.5 535.0L468.0 537.0L466.5 539.0L464.0 537.0Z M469.5 532.0L472.0 534.0L470.5 536.0L468.0 534.0Z M473.5 538.0L476.0 540.0L474.5 542.0L472.0 540.0Z M477.5 534.0L480.0 536.0L478.5 538.0L476.0 536.0Z M481.5 530.0L484.0 532.0L482.5 534.0L480.0 532.0Z M485.5 527.0L488.0 529.0L486.5 531.0L484.0 529.0Z M454.4 534.0L461.4 539.6L457.5 544.8L453.6 541.7L449.7 546.9L446.6 544.4Z M446.0 540.8L448.1 542.4L446.0 545.2L443.9 543.6Z M466.7 550.5L469.4 552.7L467.3 555.5L464.6 553.3Z M447.6 554.7L450.0 556.5L446.4 561.3L444.0 559.5Z M484.7 487.9L487.1 489.7L485.3 492.1L482.9 490.3Z M525.8 481.0L527.9 482.8L526.2 485.0L524.1 483.2Z M485.5 493.8L488.2 495.9L486.5 498.2L483.8 496.1Z"/><ellipse cx="447.0" cy="391.0" rx="1.9" ry="1.4" transform="rotate(-37 447.0 391.0)"/><ellipse cx="451.5" cy="390.5" rx="1.9" ry="1.4" transform="rotate(-47 451.5 390.5)"/><ellipse cx="456.0" cy="389.5" rx="1.9" ry="1.4" transform="rotate(-41 456.0 389.5)"/><ellipse cx="460.5" cy="388.0" rx="1.9" ry="1.4" transform="rotate(-25 460.5 388.0)"/><ellipse cx="464.5" cy="385.5" rx="1.9" ry="1.4" transform="rotate(-12 464.5 385.5)"/><ellipse cx="468.0" cy="382.5" rx="1.9" ry="1.4" transform="rotate(-38 468.0 382.5)"/><ellipse cx="470.5" cy="378.5" rx="1.9" ry="1.4" transform="rotate(-29 470.5 378.5)"/><ellipse cx="472.0" cy="374.5" rx="1.9" ry="1.4" transform="rotate(-38 472.0 374.5)"/><ellipse cx="450.0" cy="380.0" rx="1.9" ry="1.4" transform="rotate(-11 450.0 380.0)"/><ellipse cx="454.0" cy="377.5" rx="1.9" ry="1.4" transform="rotate(-15 454.0 377.5)"/><ellipse cx="457.0" cy="374.0" rx="1.9" ry="1.4" transform="rotate(-13 457.0 374.0)"/><ellipse cx="458.0" cy="369.0" rx="1.9" ry="1.4" transform="rotate(-14 458.0 369.0)"/><ellipse cx="458.5" cy="363.0" rx="1.9" ry="1.4" transform="rotate(-21 458.5 363.0)"/><ellipse cx="458.0" cy="358.5" rx="1.9" ry="1.4" transform="rotate(-20 458.0 358.5)"/><ellipse cx="471.0" cy="359.0" rx="1.9" ry="1.4" transform="rotate(-41 471.0 359.0)"/><ellipse cx="473.5" cy="363.0" rx="1.9" ry="1.4" transform="rotate(-38 473.5 363.0)"/><ellipse cx="472.5" cy="368.0" rx="1.9" ry="1.4" transform="rotate(-25 472.5 368.0)"/></g></g>
<path d="M844.7 643.3L838.3 652.5L833.7 659.0L833.1 661.2L831.8 659.7L821.7 674.6L810.6 692.1L797.7 710.6L785.7 726.2L780.2 734.5L780.8 738.6L777.8 743.8L780.4 751.1L780.3 752.3L776.6 761.2L772.1 774.6L769.2 789.5L771.4 799.9L774.4 810.4L775.9 812.7L776.6 811.1L773.3 807.4L770.4 795.5L767.4 778.8L762.5 779.1L761.7 777.6L756.1 780.0L754.3 774.6L748.3 771.1L736.4 768.7L721.5 759.8L702.2 747.9L684.3 738.9L673.2 734.5L673.2 741.2L684.3 747.1L697.0 753.8L702.2 753.1L698.5 757.5L699.5 759.8L704.4 757.5L708.2 758.3L709.6 762.0L712.6 762.0L724.5 770.9L721.5 777.6L723.8 782.1L729.0 786.5L733.5 785.8L739.4 789.5L747.6 788.0L754.3 792.5L758.0 797.7L761.7 797.0L760.2 799.2L764.0 808.1L746.1 817.8L744.6 814.8L736.4 813.6L730.5 822.3L731.2 827.5L728.2 825.2L722.3 827.5L714.1 837.1L709.6 846.1L684.3 872.9L678.4 875.1L673.2 880.3L673.4 927.8L898.2 927.8L898.2 643.4Z" fill="none" stroke="#c8443a" stroke-width="0.8" stroke-linejoin="round"/>
<path d="M673.3 666.3Q689.9 662.6 692.6 643.8L712.0 643.8Q710.2 674.6 689.0 682.0L673.3 683.8L673.3 677.8Q701.9 671.9 702.8 643.8" fill="none" stroke="#c8443a" stroke-width="0.8"/>
<path d="M674.2 670.9Q693.6 666.3 694.5 643.8" fill="none" stroke="#c8443a" stroke-width="0.8"/>
<rect x="673.4" y="349.4" width="224.8" height="282.9" fill="none" stroke="#c8443a" stroke-width="0.8"/>
<path d="M668 344V934M432 638.5H904" stroke="#b8453d" stroke-width="1.1" fill="none"/>
<rect x="432" y="344" width="472" height="590" fill="none" stroke="#1a0a0a" stroke-width="1.3"/>
</svg>
<svg class="abs" style="left:896px;top:582px" width="32" height="40" viewBox="896 582 32 40"><path d="M901.2 586.5L901.2 610.5L907.2 604.2L918.4 603.6Z" fill="#050505"/><rect x="913" y="607.5" width="8.6" height="8.6" rx="1.2" fill="#0a0a0a" stroke="#dcdcdc" stroke-width="1.3"/></svg>
<!--/ARTBOARD-->
  <!--STATUS-->
<div class="bx" style="left:113.0px;top:993.0px;width:96.0px;height:27.0px;background:#464646;border:1px solid #5a5a5a;"></div>
<div class="bx" style="left:184px;top:994px;width:1px;height:24px;background:#606060;"></div>
<span class="t" style="left:117.0px;top:997.3px;font-size:13.5px;line-height:18px;color:#d6d6d6;letter-spacing:0.523px;">66.67%</span>
<svg class="abs" style="left:188.5px;top:997.5px" width="16" height="16" viewBox="-8 -8 16 16"><path d="M-4.0 -2.0L0 2.0L4.0 -2.0" fill="none" stroke="#d8d8d8" stroke-width="1.5" stroke-linecap="round" stroke-linejoin="round"/></svg>
<div class="bx" style="left:216.4px;top:993.0px;width:94.6px;height:27.0px;background:#464646;border:1px solid #5a5a5a;"></div>
<div class="bx" style="left:287.4px;top:994px;width:1px;height:24px;background:#606060;"></div>
<span class="t" style="left:219.5px;top:996.5px;font-size:14.5px;line-height:19px;color:#d6d6d6;">0°</span>
<svg class="abs" style="left:291.0px;top:997.5px" width="16" height="16" viewBox="-8 -8 16 16"><path d="M-4.0 -2.0L0 2.0L4.0 -2.0" fill="none" stroke="#d8d8d8" stroke-width="1.5" stroke-linecap="round" stroke-linejoin="round"/></svg>
<svg class="abs" style="left:320px;top:994px" width="200" height="24" viewBox="320 994 200 24"><path d="M327 999V1011" stroke="#7c7c7c" stroke-width="2"/><path d="M336.5 999L329.5 1005L336.5 1011Z" fill="#7c7c7c"/><path d="M358 999L350.5 1005L358 1011Z" fill="#7c7c7c"/><path d="M465.5 998L474 1004.5L465.5 1011Z" fill="#a8a8a8"/><path d="M487 998L495 1004.5L487 1011Z" fill="#a8a8a8"/><path d="M497.5 998V1011" stroke="#a8a8a8" stroke-width="2"/></svg>
<div class="bx" style="left:370.7px;top:993.0px;width:80.9px;height:27.0px;background:#464646;border:1px solid #5a5a5a;"></div>
<div class="bx" style="left:426.7px;top:994px;width:1px;height:24px;background:#606060;"></div>
<span class="t" style="left:375.5px;top:999.0px;font-size:13px;line-height:17px;color:#d0d0d0;">1</span>
<svg class="abs" style="left:431.0px;top:997.5px" width="16" height="16" viewBox="-8 -8 16 16"><path d="M-4.0 -2.0L0 2.0L4.0 -2.0" fill="none" stroke="#d8d8d8" stroke-width="1.5" stroke-linecap="round" stroke-linejoin="round"/></svg>
<div class="bx" style="left:510px;top:992px;width:283px;height:26px;background:#484848;"></div>
<span class="t" style="left:623.0px;top:996.6px;font-size:13.5px;line-height:18px;color:#c6c6c6;letter-spacing:-0.067px;">Selection</span>
<div class="bx" style="left:793px;top:992px;width:22px;height:26px;background:#4e4e4e;"></div>
<svg class="abs" style="left:796px;top:994px" width="40" height="20" viewBox="796 994 40 20"><path d="M800.5 997L808 1002.5L800.5 1008Z" fill="#b0b0b0"/><path d="M830.5 997L826 1001.5L830.5 1006" fill="none" stroke="#a0a0a0" stroke-width="1.3"/></svg>
<div class="bx" style="left:815px;top:992px;width:400px;height:26px;background:#424242;"></div>
<svg class="abs" style="left:820px;top:994px" width="20" height="20" viewBox="820 994 20 20"><path d="M830.5 997L826 1001.5L830.5 1006" fill="none" stroke="#a0a0a0" stroke-width="1.3"/></svg>
<!--/STATUS-->
  <!--OVERLAY-->
<div class="bx" style="left:4px;top:630px;width:1200px;height:388px;background:linear-gradient(to bottom,rgba(0,0,0,0) 0%,rgba(0,0,0,0.03) 12%,rgba(0,0,0,0.125) 40%,rgba(0,0,0,0.245) 78.4%,rgba(0,0,0,0.29) 88.1%,rgba(0,0,0,0.37) 97.9%,rgba(0,0,0,0.40) 100%);"></div>
<div class="bx" style="left:28px;top:969px;width:1200px;height:6px;background:#ff0033;"></div>
<svg class="abs" style="left:40px;top:995px" width="260" height="56" viewBox="40 995 260 56"><path d="M60 1004.5L90.2 1023L60 1041.5Z" fill="#ececec"/><path d="M152.2 1007L174.3 1023L152.2 1039Z" fill="#ececec"/><rect x="178" y="1007" width="6" height="32" fill="#ececec"/><path d="M244 1016.5H252L262.5 1006V1040L252 1029.5H244Z" fill="#ececec"/><path d="M266.5 1014.2A9.8 9.8 0 0 1 266.5 1031.8" fill="none" stroke="#ececec" stroke-width="3.2"/><path d="M266.5 1006.2A17.6 17.6 0 0 1 266.5 1039.8" fill="none" stroke="#ececec" stroke-width="3.2"/></svg>
<span class="t" style="left:324.2px;top:1004.8px;font-size:26px;line-height:34px;color:#ececec;letter-spacing:-0.040px;">1:05:09 / 1:11:32</span>
<!--/OVERLAY-->
</div>
</div>
</body>
</html>
